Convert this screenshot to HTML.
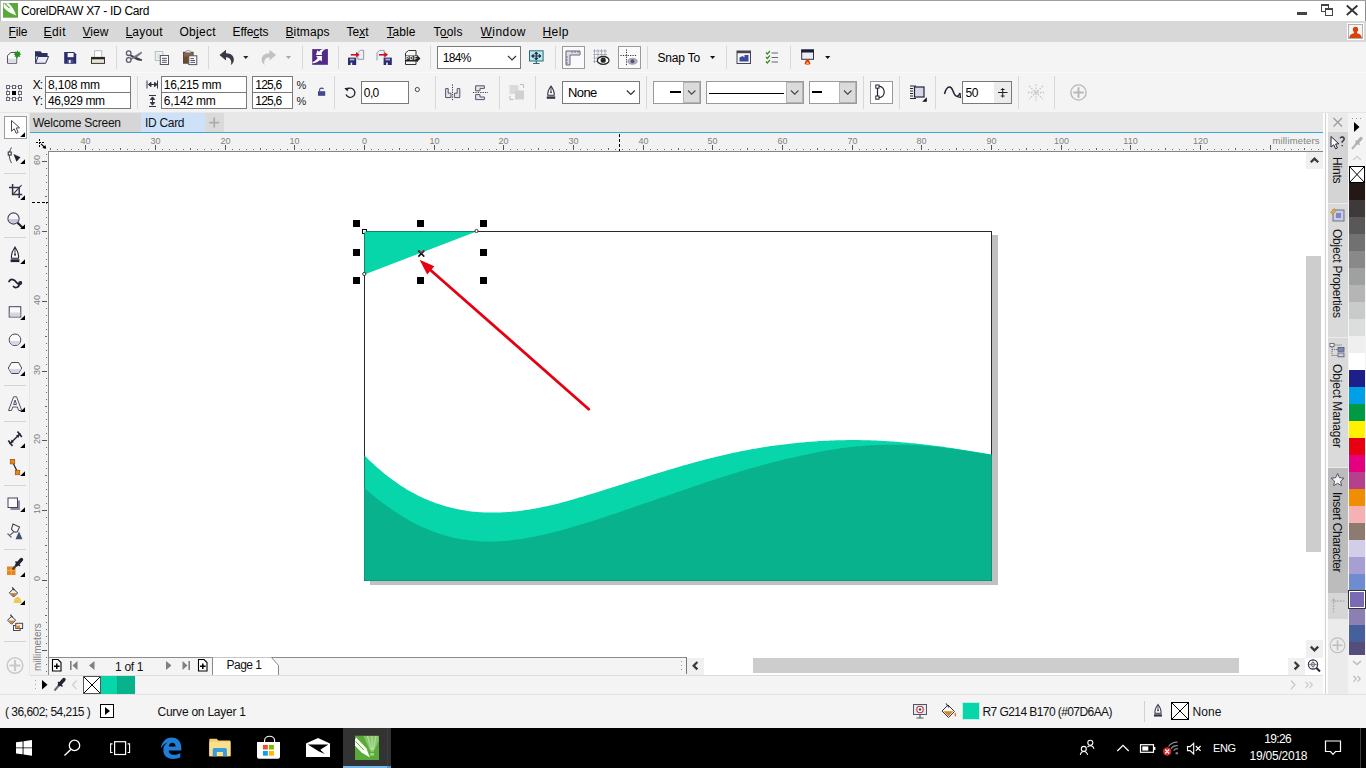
<!DOCTYPE html>
<html><head><meta charset="utf-8"><title>CorelDRAW X7 - ID Card</title>
<style>html,body{margin:0;padding:0;}
body{width:1366px;height:768px;overflow:hidden;position:relative;background:#f0f0f0;font-family:"Liberation Sans",sans-serif;}
#r{position:absolute;left:0;top:0;width:1366px;height:768px;overflow:hidden;}
#r>div{position:absolute;}
#r>span{position:absolute;white-space:pre;}
#r>svg{position:absolute;left:0;top:0;}
</style></head>
<body><div id="r">
<div style="left:0px;top:0px;width:1366px;height:21px;background:#ffffff;"></div>
<div style="left:0px;top:0px;width:1366px;height:1px;background:#a0a0a0;"></div>
<div style="left:1365px;top:1px;width:1px;height:20px;background:#8c8c8c;"></div>
<div style="left:0px;top:1px;width:1px;height:20px;background:#b9b9b9;"></div>
<div style="left:0px;top:21px;width:1366px;height:21px;background:#d8d8d8;"></div>
<div style="left:0px;top:42px;width:1366px;height:30px;background:#f4f4f4;"></div>
<div style="left:0px;top:72px;width:1366px;height:1px;background:#fafafa;"></div>
<div style="left:0px;top:73px;width:1366px;height:40px;background:#f4f4f4;"></div>
<div style="left:0px;top:112px;width:1366px;height:1px;background:#e6e6e6;"></div>
<div style="left:0px;top:113px;width:30px;height:582px;background:#f4f4f4;"></div>
<div style="left:29px;top:113px;width:1px;height:562px;background:#e6e6e6;"></div>
<div style="left:30px;top:113px;width:1293px;height:19px;background:#e8e8e8;"></div>
<div style="left:30px;top:113px;width:111px;height:19px;background:#d6d6d6;"></div>
<div style="left:141px;top:113px;width:64px;height:19px;background:#cde2f8;"></div>
<div style="left:205px;top:113px;width:19px;height:19px;background:#dadada;"></div>
<div style="left:30px;top:132px;width:1293px;height:1px;background:#39a6d6;"></div>
<div style="left:30px;top:133px;width:1293px;height:18px;background:#f2f2f2;"></div>
<div style="left:30px;top:151px;width:18px;height:524px;background:#f2f2f2;"></div>
<div style="left:48px;top:151px;width:1258px;height:507px;background:#ffffff;"></div>
<div style="left:48px;top:151px;width:1275px;height:1px;background:#858585;"></div>
<div style="left:48px;top:151px;width:1px;height:524px;background:#8c8c8c;"></div>
<div style="left:48px;top:657px;width:639px;height:1px;background:#8c8c8c;"></div>
<div style="left:1306px;top:152px;width:17px;height:505px;background:#ffffff;"></div>
<div style="left:1306px;top:152px;width:17px;height:17px;background:#f0f0f0;"></div>
<div style="left:1306px;top:151px;width:17px;height:1px;background:#858585;"></div>
<div style="left:1306px;top:640px;width:17px;height:17px;background:#f0f0f0;"></div>
<div style="left:1306px;top:256px;width:15px;height:296px;background:#cdcdcd;"></div>
<div style="left:48px;top:658px;width:1275px;height:17px;background:#f4f4f4;"></div>
<div style="left:686px;top:657px;width:1px;height:17px;background:#777777;"></div>
<div style="left:48px;top:658px;width:1px;height:17px;background:#8c8c8c;"></div>
<div style="left:687px;top:658px;width:636px;height:17px;background:#ffffff;"></div>
<div style="left:687px;top:658px;width:17px;height:17px;background:#f0f0f0;"></div>
<div style="left:1288px;top:658px;width:17px;height:17px;background:#f0f0f0;"></div>
<div style="left:753px;top:658px;width:486px;height:15px;background:#cdcdcd;"></div>
<div style="left:30px;top:675px;width:1293px;height:1px;background:#dcdcdc;"></div>
<div style="left:30px;top:676px;width:1293px;height:18px;background:#f4f4f4;"></div>
<div style="left:1323px;top:113px;width:5px;height:582px;background:#fdfdfd;"></div>
<div style="left:1325px;top:113px;width:1px;height:582px;background:#d2d2d2;"></div>
<div style="left:1328px;top:113px;width:20px;height:582px;background:#ebebeb;"></div>
<div style="left:1348px;top:113px;width:18px;height:582px;background:#f4f4f4;"></div>
<div style="left:0px;top:694px;width:1366px;height:1px;background:#e2e2e2;"></div>
<div style="left:0px;top:695px;width:1366px;height:33px;background:#f4f4f4;"></div>
<div style="left:0px;top:728px;width:1366px;height:40px;background:#000000;"></div>
<div style="left:343px;top:728px;width:48px;height:40px;background:#333333;"></div>
<div style="left:387px;top:728px;width:1px;height:40px;background:#3d3d3d;"></div>
<div style="left:343px;top:766px;width:44px;height:2px;background:#76b9ed;"></div>
<div style="left:387px;top:766px;width:4px;height:2px;background:#5a93c4;"></div>
<div style="left:1360px;top:728px;width:1px;height:40px;background:#3c3c3c;"></div>
<div style="left:992px;top:235px;width:6px;height:350px;background:#c0c0c0;"></div>
<div style="left:370px;top:581px;width:628px;height:4px;background:#c0c0c0;"></div>
<div style="left:1347px;top:23px;width:17px;height:17px;background:#fdfdfd;box-sizing:border-box;border:1px solid #fff;"></div>
<div style="left:1348px;top:24px;width:15px;height:15px;background:#f4f4f4;box-sizing:border-box;border:1px solid #b0b0b0;"></div>
<div style="left:437px;top:46px;width:84px;height:23px;background:#fff;box-sizing:border-box;border:1px solid #7a7a7a;"></div>
<div style="left:562px;top:46px;width:23px;height:23px;background:#fafafa;box-sizing:border-box;border:1px solid #9a9a9a;"></div>
<div style="left:618px;top:46px;width:23px;height:23px;background:#fafafa;box-sizing:border-box;border:1px solid #9a9a9a;"></div>
<div style="left:45px;top:76px;width:86px;height:17px;background:#fff;box-sizing:border-box;border:1px solid #7a7a7a;"></div>
<div style="left:45px;top:92px;width:86px;height:17px;background:#fff;box-sizing:border-box;border:1px solid #7a7a7a;"></div>
<div style="left:161px;top:76px;width:86px;height:17px;background:#fff;box-sizing:border-box;border:1px solid #7a7a7a;"></div>
<div style="left:161px;top:92px;width:86px;height:17px;background:#fff;box-sizing:border-box;border:1px solid #7a7a7a;"></div>
<div style="left:252px;top:76px;width:41px;height:17px;background:#fff;box-sizing:border-box;border:1px solid #7a7a7a;"></div>
<div style="left:252px;top:92px;width:41px;height:17px;background:#fff;box-sizing:border-box;border:1px solid #7a7a7a;"></div>
<div style="left:361px;top:81px;width:48px;height:23px;background:#fff;box-sizing:border-box;border:1px solid #7a7a7a;"></div>
<div style="left:562px;top:81px;width:78px;height:23px;background:#fff;box-sizing:border-box;border:1px solid #7a7a7a;"></div>
<div style="left:653px;top:81px;width:48px;height:23px;background:#fff;box-sizing:border-box;border:1px solid #9a9a9a;"></div>
<div style="left:683px;top:82px;width:17px;height:21px;background:#dbdbdb;box-sizing:border-box;border:1px solid #b4b4b4;"></div>
<div style="left:706px;top:81px;width:98px;height:23px;background:#fff;box-sizing:border-box;border:1px solid #9a9a9a;"></div>
<div style="left:786px;top:82px;width:17px;height:21px;background:#dbdbdb;box-sizing:border-box;border:1px solid #b4b4b4;"></div>
<div style="left:809px;top:81px;width:48px;height:23px;background:#fff;box-sizing:border-box;border:1px solid #9a9a9a;"></div>
<div style="left:839px;top:82px;width:17px;height:21px;background:#dbdbdb;box-sizing:border-box;border:1px solid #b4b4b4;"></div>
<div style="left:870px;top:81px;width:23px;height:23px;background:#fff;box-sizing:border-box;border:1px solid #9a9a9a;"></div>
<div style="left:962px;top:81px;width:50px;height:23px;background:#fff;box-sizing:border-box;border:1px solid #7a7a7a;"></div>
<div style="left:994px;top:82px;width:17px;height:21px;background:#ececec;"></div>
<div style="left:4px;top:116px;width:23px;height:23px;background:#fff;box-sizing:border-box;border:1px solid #9c9c9c;"></div>
<div style="left:1328px;top:113px;width:20px;height:19px;background:#eaeaea;"></div>
<div style="left:1328px;top:132px;width:20px;height:71px;background:#d4d4d4;"></div>
<div style="left:1328px;top:204px;width:20px;height:133px;background:#dadada;"></div>
<div style="left:1328px;top:338px;width:20px;height:129px;background:#dadada;"></div>
<div style="left:1328px;top:468px;width:20px;height:125px;background:#bcbcbc;"></div>
<div style="left:1328px;top:593px;width:20px;height:26px;background:#d6d6d6;"></div>
<svg width="1366" height="768" viewBox="0 0 1366 768" shape-rendering="crispEdges">
<rect x="364.5" y="231.5" width="627" height="349" fill="none" stroke="#2a2a2a" stroke-width="1"/>
<rect x="353" y="220" width="7" height="7" fill="#000"/>
<rect x="353" y="249" width="7" height="7" fill="#000"/>
<rect x="353" y="277" width="7" height="7" fill="#000"/>
<rect x="417" y="220" width="7" height="7" fill="#000"/>
<rect x="417" y="277" width="7" height="7" fill="#000"/>
<rect x="480" y="220" width="7" height="7" fill="#000"/>
<rect x="480" y="249" width="7" height="7" fill="#000"/>
<rect x="480" y="277" width="7" height="7" fill="#000"/>
<rect x="362.5" y="229.5" width="4" height="4" fill="#fff" stroke="#000" stroke-width="1"/>
<rect x="50" y="148" width="1" height="2" fill="#666"/>
<rect x="57" y="149" width="1" height="1" fill="#6a6a6a"/>
<rect x="64" y="149" width="1" height="1" fill="#6a6a6a"/>
<rect x="71" y="149" width="1" height="1" fill="#6a6a6a"/>
<rect x="78" y="149" width="1" height="1" fill="#6a6a6a"/>
<rect x="85" y="145" width="1" height="5" fill="#555"/>
<rect x="92" y="149" width="1" height="1" fill="#6a6a6a"/>
<rect x="99" y="149" width="1" height="1" fill="#6a6a6a"/>
<rect x="106" y="149" width="1" height="1" fill="#6a6a6a"/>
<rect x="113" y="149" width="1" height="1" fill="#6a6a6a"/>
<rect x="120" y="148" width="1" height="2" fill="#666"/>
<rect x="127" y="149" width="1" height="1" fill="#6a6a6a"/>
<rect x="134" y="149" width="1" height="1" fill="#6a6a6a"/>
<rect x="141" y="149" width="1" height="1" fill="#6a6a6a"/>
<rect x="148" y="149" width="1" height="1" fill="#6a6a6a"/>
<rect x="155" y="145" width="1" height="5" fill="#555"/>
<rect x="162" y="149" width="1" height="1" fill="#6a6a6a"/>
<rect x="169" y="149" width="1" height="1" fill="#6a6a6a"/>
<rect x="176" y="149" width="1" height="1" fill="#6a6a6a"/>
<rect x="183" y="149" width="1" height="1" fill="#6a6a6a"/>
<rect x="190" y="148" width="1" height="2" fill="#666"/>
<rect x="197" y="149" width="1" height="1" fill="#6a6a6a"/>
<rect x="204" y="149" width="1" height="1" fill="#6a6a6a"/>
<rect x="211" y="149" width="1" height="1" fill="#6a6a6a"/>
<rect x="218" y="149" width="1" height="1" fill="#6a6a6a"/>
<rect x="225" y="145" width="1" height="5" fill="#555"/>
<rect x="232" y="149" width="1" height="1" fill="#6a6a6a"/>
<rect x="239" y="149" width="1" height="1" fill="#6a6a6a"/>
<rect x="246" y="149" width="1" height="1" fill="#6a6a6a"/>
<rect x="253" y="149" width="1" height="1" fill="#6a6a6a"/>
<rect x="260" y="148" width="1" height="2" fill="#666"/>
<rect x="266" y="149" width="1" height="1" fill="#6a6a6a"/>
<rect x="273" y="149" width="1" height="1" fill="#6a6a6a"/>
<rect x="280" y="149" width="1" height="1" fill="#6a6a6a"/>
<rect x="287" y="149" width="1" height="1" fill="#6a6a6a"/>
<rect x="294" y="145" width="1" height="5" fill="#555"/>
<rect x="301" y="149" width="1" height="1" fill="#6a6a6a"/>
<rect x="308" y="149" width="1" height="1" fill="#6a6a6a"/>
<rect x="315" y="149" width="1" height="1" fill="#6a6a6a"/>
<rect x="322" y="149" width="1" height="1" fill="#6a6a6a"/>
<rect x="329" y="148" width="1" height="2" fill="#666"/>
<rect x="336" y="149" width="1" height="1" fill="#6a6a6a"/>
<rect x="343" y="149" width="1" height="1" fill="#6a6a6a"/>
<rect x="350" y="149" width="1" height="1" fill="#6a6a6a"/>
<rect x="357" y="149" width="1" height="1" fill="#6a6a6a"/>
<rect x="364" y="145" width="1" height="5" fill="#555"/>
<rect x="371" y="149" width="1" height="1" fill="#6a6a6a"/>
<rect x="378" y="149" width="1" height="1" fill="#6a6a6a"/>
<rect x="385" y="149" width="1" height="1" fill="#6a6a6a"/>
<rect x="392" y="149" width="1" height="1" fill="#6a6a6a"/>
<rect x="399" y="148" width="1" height="2" fill="#666"/>
<rect x="406" y="149" width="1" height="1" fill="#6a6a6a"/>
<rect x="413" y="149" width="1" height="1" fill="#6a6a6a"/>
<rect x="420" y="149" width="1" height="1" fill="#6a6a6a"/>
<rect x="427" y="149" width="1" height="1" fill="#6a6a6a"/>
<rect x="434" y="145" width="1" height="5" fill="#555"/>
<rect x="441" y="149" width="1" height="1" fill="#6a6a6a"/>
<rect x="448" y="149" width="1" height="1" fill="#6a6a6a"/>
<rect x="455" y="149" width="1" height="1" fill="#6a6a6a"/>
<rect x="462" y="149" width="1" height="1" fill="#6a6a6a"/>
<rect x="468" y="148" width="1" height="2" fill="#666"/>
<rect x="475" y="149" width="1" height="1" fill="#6a6a6a"/>
<rect x="482" y="149" width="1" height="1" fill="#6a6a6a"/>
<rect x="489" y="149" width="1" height="1" fill="#6a6a6a"/>
<rect x="496" y="149" width="1" height="1" fill="#6a6a6a"/>
<rect x="503" y="145" width="1" height="5" fill="#555"/>
<rect x="510" y="149" width="1" height="1" fill="#6a6a6a"/>
<rect x="517" y="149" width="1" height="1" fill="#6a6a6a"/>
<rect x="524" y="149" width="1" height="1" fill="#6a6a6a"/>
<rect x="531" y="149" width="1" height="1" fill="#6a6a6a"/>
<rect x="538" y="148" width="1" height="2" fill="#666"/>
<rect x="545" y="149" width="1" height="1" fill="#6a6a6a"/>
<rect x="552" y="149" width="1" height="1" fill="#6a6a6a"/>
<rect x="559" y="149" width="1" height="1" fill="#6a6a6a"/>
<rect x="566" y="149" width="1" height="1" fill="#6a6a6a"/>
<rect x="573" y="145" width="1" height="5" fill="#555"/>
<rect x="580" y="149" width="1" height="1" fill="#6a6a6a"/>
<rect x="587" y="149" width="1" height="1" fill="#6a6a6a"/>
<rect x="594" y="149" width="1" height="1" fill="#6a6a6a"/>
<rect x="601" y="149" width="1" height="1" fill="#6a6a6a"/>
<rect x="608" y="148" width="1" height="2" fill="#666"/>
<rect x="615" y="149" width="1" height="1" fill="#6a6a6a"/>
<rect x="622" y="149" width="1" height="1" fill="#6a6a6a"/>
<rect x="629" y="149" width="1" height="1" fill="#6a6a6a"/>
<rect x="636" y="149" width="1" height="1" fill="#6a6a6a"/>
<rect x="643" y="145" width="1" height="5" fill="#555"/>
<rect x="650" y="149" width="1" height="1" fill="#6a6a6a"/>
<rect x="657" y="149" width="1" height="1" fill="#6a6a6a"/>
<rect x="664" y="149" width="1" height="1" fill="#6a6a6a"/>
<rect x="671" y="149" width="1" height="1" fill="#6a6a6a"/>
<rect x="678" y="148" width="1" height="2" fill="#666"/>
<rect x="684" y="149" width="1" height="1" fill="#6a6a6a"/>
<rect x="691" y="149" width="1" height="1" fill="#6a6a6a"/>
<rect x="698" y="149" width="1" height="1" fill="#6a6a6a"/>
<rect x="705" y="149" width="1" height="1" fill="#6a6a6a"/>
<rect x="712" y="145" width="1" height="5" fill="#555"/>
<rect x="719" y="149" width="1" height="1" fill="#6a6a6a"/>
<rect x="726" y="149" width="1" height="1" fill="#6a6a6a"/>
<rect x="733" y="149" width="1" height="1" fill="#6a6a6a"/>
<rect x="740" y="149" width="1" height="1" fill="#6a6a6a"/>
<rect x="747" y="148" width="1" height="2" fill="#666"/>
<rect x="754" y="149" width="1" height="1" fill="#6a6a6a"/>
<rect x="761" y="149" width="1" height="1" fill="#6a6a6a"/>
<rect x="768" y="149" width="1" height="1" fill="#6a6a6a"/>
<rect x="775" y="149" width="1" height="1" fill="#6a6a6a"/>
<rect x="782" y="145" width="1" height="5" fill="#555"/>
<rect x="789" y="149" width="1" height="1" fill="#6a6a6a"/>
<rect x="796" y="149" width="1" height="1" fill="#6a6a6a"/>
<rect x="803" y="149" width="1" height="1" fill="#6a6a6a"/>
<rect x="810" y="149" width="1" height="1" fill="#6a6a6a"/>
<rect x="817" y="148" width="1" height="2" fill="#666"/>
<rect x="824" y="149" width="1" height="1" fill="#6a6a6a"/>
<rect x="831" y="149" width="1" height="1" fill="#6a6a6a"/>
<rect x="838" y="149" width="1" height="1" fill="#6a6a6a"/>
<rect x="845" y="149" width="1" height="1" fill="#6a6a6a"/>
<rect x="852" y="145" width="1" height="5" fill="#555"/>
<rect x="859" y="149" width="1" height="1" fill="#6a6a6a"/>
<rect x="866" y="149" width="1" height="1" fill="#6a6a6a"/>
<rect x="873" y="149" width="1" height="1" fill="#6a6a6a"/>
<rect x="880" y="149" width="1" height="1" fill="#6a6a6a"/>
<rect x="886" y="148" width="1" height="2" fill="#666"/>
<rect x="893" y="149" width="1" height="1" fill="#6a6a6a"/>
<rect x="900" y="149" width="1" height="1" fill="#6a6a6a"/>
<rect x="907" y="149" width="1" height="1" fill="#6a6a6a"/>
<rect x="914" y="149" width="1" height="1" fill="#6a6a6a"/>
<rect x="921" y="145" width="1" height="5" fill="#555"/>
<rect x="928" y="149" width="1" height="1" fill="#6a6a6a"/>
<rect x="935" y="149" width="1" height="1" fill="#6a6a6a"/>
<rect x="942" y="149" width="1" height="1" fill="#6a6a6a"/>
<rect x="949" y="149" width="1" height="1" fill="#6a6a6a"/>
<rect x="956" y="148" width="1" height="2" fill="#666"/>
<rect x="963" y="149" width="1" height="1" fill="#6a6a6a"/>
<rect x="970" y="149" width="1" height="1" fill="#6a6a6a"/>
<rect x="977" y="149" width="1" height="1" fill="#6a6a6a"/>
<rect x="984" y="149" width="1" height="1" fill="#6a6a6a"/>
<rect x="991" y="145" width="1" height="5" fill="#555"/>
<rect x="998" y="149" width="1" height="1" fill="#6a6a6a"/>
<rect x="1005" y="149" width="1" height="1" fill="#6a6a6a"/>
<rect x="1012" y="149" width="1" height="1" fill="#6a6a6a"/>
<rect x="1019" y="149" width="1" height="1" fill="#6a6a6a"/>
<rect x="1026" y="148" width="1" height="2" fill="#666"/>
<rect x="1033" y="149" width="1" height="1" fill="#6a6a6a"/>
<rect x="1040" y="149" width="1" height="1" fill="#6a6a6a"/>
<rect x="1047" y="149" width="1" height="1" fill="#6a6a6a"/>
<rect x="1054" y="149" width="1" height="1" fill="#6a6a6a"/>
<rect x="1061" y="145" width="1" height="5" fill="#555"/>
<rect x="1068" y="149" width="1" height="1" fill="#6a6a6a"/>
<rect x="1075" y="149" width="1" height="1" fill="#6a6a6a"/>
<rect x="1082" y="149" width="1" height="1" fill="#6a6a6a"/>
<rect x="1089" y="149" width="1" height="1" fill="#6a6a6a"/>
<rect x="1096" y="148" width="1" height="2" fill="#666"/>
<rect x="1102" y="149" width="1" height="1" fill="#6a6a6a"/>
<rect x="1109" y="149" width="1" height="1" fill="#6a6a6a"/>
<rect x="1116" y="149" width="1" height="1" fill="#6a6a6a"/>
<rect x="1123" y="149" width="1" height="1" fill="#6a6a6a"/>
<rect x="1130" y="145" width="1" height="5" fill="#555"/>
<rect x="1137" y="149" width="1" height="1" fill="#6a6a6a"/>
<rect x="1144" y="149" width="1" height="1" fill="#6a6a6a"/>
<rect x="1151" y="149" width="1" height="1" fill="#6a6a6a"/>
<rect x="1158" y="149" width="1" height="1" fill="#6a6a6a"/>
<rect x="1165" y="148" width="1" height="2" fill="#666"/>
<rect x="1172" y="149" width="1" height="1" fill="#6a6a6a"/>
<rect x="1179" y="149" width="1" height="1" fill="#6a6a6a"/>
<rect x="1186" y="149" width="1" height="1" fill="#6a6a6a"/>
<rect x="1193" y="149" width="1" height="1" fill="#6a6a6a"/>
<rect x="1200" y="145" width="1" height="5" fill="#555"/>
<rect x="1207" y="149" width="1" height="1" fill="#6a6a6a"/>
<rect x="1214" y="149" width="1" height="1" fill="#6a6a6a"/>
<rect x="1221" y="149" width="1" height="1" fill="#6a6a6a"/>
<rect x="1228" y="149" width="1" height="1" fill="#6a6a6a"/>
<rect x="1235" y="148" width="1" height="2" fill="#666"/>
<rect x="1242" y="149" width="1" height="1" fill="#6a6a6a"/>
<rect x="1249" y="149" width="1" height="1" fill="#6a6a6a"/>
<rect x="1256" y="149" width="1" height="1" fill="#6a6a6a"/>
<rect x="1263" y="149" width="1" height="1" fill="#6a6a6a"/>
<rect x="1270" y="145" width="1" height="5" fill="#555"/>
<rect x="1277" y="149" width="1" height="1" fill="#6a6a6a"/>
<rect x="1284" y="149" width="1" height="1" fill="#6a6a6a"/>
<rect x="1291" y="149" width="1" height="1" fill="#6a6a6a"/>
<rect x="1298" y="149" width="1" height="1" fill="#6a6a6a"/>
<rect x="1304" y="148" width="1" height="2" fill="#666"/>
<rect x="1311" y="149" width="1" height="1" fill="#6a6a6a"/>
<rect x="1318" y="149" width="1" height="1" fill="#6a6a6a"/>
<rect x="619" y="134" width="1" height="3" fill="#000"/><rect x="619" y="139" width="1" height="3" fill="#000"/><rect x="619" y="144" width="1" height="3" fill="#000"/><rect x="619" y="149" width="1" height="2" fill="#000"/>
<rect x="32" y="202" width="3" height="1" fill="#000"/><rect x="37" y="202" width="3" height="1" fill="#000"/><rect x="42" y="202" width="3" height="1" fill="#000"/><rect x="46" y="202" width="2" height="1" fill="#000"/>
<rect x="46" y="671" width="1" height="1" fill="#6a6a6a"/>
<rect x="46" y="664" width="1" height="1" fill="#6a6a6a"/>
<rect x="46" y="657" width="1" height="1" fill="#6a6a6a"/>
<rect x="42" y="650" width="5" height="1" fill="#555"/>
<rect x="46" y="643" width="1" height="1" fill="#6a6a6a"/>
<rect x="46" y="636" width="1" height="1" fill="#6a6a6a"/>
<rect x="46" y="629" width="1" height="1" fill="#6a6a6a"/>
<rect x="46" y="622" width="1" height="1" fill="#6a6a6a"/>
<rect x="45" y="615" width="2" height="1" fill="#666"/>
<rect x="46" y="608" width="1" height="1" fill="#6a6a6a"/>
<rect x="46" y="601" width="1" height="1" fill="#6a6a6a"/>
<rect x="46" y="594" width="1" height="1" fill="#6a6a6a"/>
<rect x="46" y="587" width="1" height="1" fill="#6a6a6a"/>
<rect x="42" y="580" width="5" height="1" fill="#555"/>
<rect x="46" y="573" width="1" height="1" fill="#6a6a6a"/>
<rect x="46" y="566" width="1" height="1" fill="#6a6a6a"/>
<rect x="46" y="559" width="1" height="1" fill="#6a6a6a"/>
<rect x="46" y="552" width="1" height="1" fill="#6a6a6a"/>
<rect x="45" y="545" width="2" height="1" fill="#666"/>
<rect x="46" y="538" width="1" height="1" fill="#6a6a6a"/>
<rect x="46" y="531" width="1" height="1" fill="#6a6a6a"/>
<rect x="46" y="524" width="1" height="1" fill="#6a6a6a"/>
<rect x="46" y="517" width="1" height="1" fill="#6a6a6a"/>
<rect x="42" y="510" width="5" height="1" fill="#555"/>
<rect x="46" y="503" width="1" height="1" fill="#6a6a6a"/>
<rect x="46" y="496" width="1" height="1" fill="#6a6a6a"/>
<rect x="46" y="489" width="1" height="1" fill="#6a6a6a"/>
<rect x="46" y="482" width="1" height="1" fill="#6a6a6a"/>
<rect x="45" y="475" width="2" height="1" fill="#666"/>
<rect x="46" y="468" width="1" height="1" fill="#6a6a6a"/>
<rect x="46" y="461" width="1" height="1" fill="#6a6a6a"/>
<rect x="46" y="454" width="1" height="1" fill="#6a6a6a"/>
<rect x="46" y="447" width="1" height="1" fill="#6a6a6a"/>
<rect x="42" y="440" width="5" height="1" fill="#555"/>
<rect x="46" y="433" width="1" height="1" fill="#6a6a6a"/>
<rect x="46" y="426" width="1" height="1" fill="#6a6a6a"/>
<rect x="46" y="419" width="1" height="1" fill="#6a6a6a"/>
<rect x="46" y="412" width="1" height="1" fill="#6a6a6a"/>
<rect x="45" y="406" width="2" height="1" fill="#666"/>
<rect x="46" y="399" width="1" height="1" fill="#6a6a6a"/>
<rect x="46" y="392" width="1" height="1" fill="#6a6a6a"/>
<rect x="46" y="385" width="1" height="1" fill="#6a6a6a"/>
<rect x="46" y="378" width="1" height="1" fill="#6a6a6a"/>
<rect x="42" y="371" width="5" height="1" fill="#555"/>
<rect x="46" y="364" width="1" height="1" fill="#6a6a6a"/>
<rect x="46" y="357" width="1" height="1" fill="#6a6a6a"/>
<rect x="46" y="350" width="1" height="1" fill="#6a6a6a"/>
<rect x="46" y="343" width="1" height="1" fill="#6a6a6a"/>
<rect x="45" y="336" width="2" height="1" fill="#666"/>
<rect x="46" y="329" width="1" height="1" fill="#6a6a6a"/>
<rect x="46" y="322" width="1" height="1" fill="#6a6a6a"/>
<rect x="46" y="315" width="1" height="1" fill="#6a6a6a"/>
<rect x="46" y="308" width="1" height="1" fill="#6a6a6a"/>
<rect x="42" y="301" width="5" height="1" fill="#555"/>
<rect x="46" y="294" width="1" height="1" fill="#6a6a6a"/>
<rect x="46" y="287" width="1" height="1" fill="#6a6a6a"/>
<rect x="46" y="280" width="1" height="1" fill="#6a6a6a"/>
<rect x="46" y="273" width="1" height="1" fill="#6a6a6a"/>
<rect x="45" y="266" width="2" height="1" fill="#666"/>
<rect x="46" y="259" width="1" height="1" fill="#6a6a6a"/>
<rect x="46" y="252" width="1" height="1" fill="#6a6a6a"/>
<rect x="46" y="245" width="1" height="1" fill="#6a6a6a"/>
<rect x="46" y="238" width="1" height="1" fill="#6a6a6a"/>
<rect x="42" y="231" width="5" height="1" fill="#555"/>
<rect x="46" y="224" width="1" height="1" fill="#6a6a6a"/>
<rect x="46" y="217" width="1" height="1" fill="#6a6a6a"/>
<rect x="46" y="210" width="1" height="1" fill="#6a6a6a"/>
<rect x="46" y="203" width="1" height="1" fill="#6a6a6a"/>
<rect x="45" y="196" width="2" height="1" fill="#666"/>
<rect x="46" y="189" width="1" height="1" fill="#6a6a6a"/>
<rect x="46" y="182" width="1" height="1" fill="#6a6a6a"/>
<rect x="46" y="175" width="1" height="1" fill="#6a6a6a"/>
<rect x="46" y="168" width="1" height="1" fill="#6a6a6a"/>
<rect x="42" y="161" width="5" height="1" fill="#555"/>
<rect x="46" y="154" width="1" height="1" fill="#6a6a6a"/>
<rect x="36" y="142" width="2" height="1" fill="#000"/><rect x="39" y="142" width="2" height="1" fill="#000"/><rect x="42" y="142" width="2" height="1" fill="#000"/><rect x="39" y="139" width="1" height="2" fill="#000"/><rect x="39" y="142" width="1" height="2" fill="#000"/><rect x="39" y="145" width="1" height="2" fill="#000"/>
<rect x="1297" y="12" width="10" height="3" fill="#444"/>
<rect x="1321.5" y="4.5" width="7" height="7" fill="#fff" stroke="#444" stroke-width="1"/><rect x="1321" y="4" width="8" height="2" fill="#444"/><rect x="1325.5" y="8.5" width="7" height="7" fill="#fff" stroke="#444" stroke-width="1"/><rect x="1325" y="8" width="8" height="2" fill="#444"/>
<rect x="9" y="37" width="7" height="1" fill="#000"/>
<rect x="44" y="37" width="8" height="1" fill="#000"/>
<rect x="83" y="37" width="8" height="1" fill="#000"/>
<rect x="126" y="37" width="7" height="1" fill="#000"/>
<rect x="196" y="37" width="3" height="1" fill="#000"/>
<rect x="253" y="37" width="6" height="1" fill="#000"/>
<rect x="286" y="37" width="8" height="1" fill="#000"/>
<rect x="359" y="37" width="6" height="1" fill="#000"/>
<rect x="387" y="37" width="7" height="1" fill="#000"/>
<rect x="441" y="37" width="7" height="1" fill="#000"/>
<rect x="481" y="37" width="12" height="1" fill="#000"/>
<rect x="543" y="37" width="9" height="1" fill="#000"/>
<rect x="116" y="46" width="1" height="23" fill="#d8d8d8"/>
<rect x="208" y="46" width="1" height="23" fill="#d8d8d8"/>
<rect x="302" y="46" width="1" height="23" fill="#d8d8d8"/>
<rect x="338" y="46" width="1" height="23" fill="#d8d8d8"/>
<rect x="430" y="46" width="1" height="23" fill="#d8d8d8"/>
<rect x="555" y="46" width="1" height="23" fill="#d8d8d8"/>
<rect x="647" y="46" width="1" height="23" fill="#d8d8d8"/>
<rect x="726" y="46" width="1" height="23" fill="#d8d8d8"/>
<rect x="790" y="46" width="1" height="23" fill="#d8d8d8"/>
<rect x="137" y="76" width="1" height="33" fill="#d8d8d8"/>
<rect x="334" y="76" width="1" height="33" fill="#d8d8d8"/>
<rect x="435" y="76" width="1" height="33" fill="#d8d8d8"/>
<rect x="499" y="76" width="1" height="33" fill="#d8d8d8"/>
<rect x="535" y="76" width="1" height="33" fill="#d8d8d8"/>
<rect x="646" y="76" width="1" height="33" fill="#d8d8d8"/>
<rect x="863" y="76" width="1" height="33" fill="#d8d8d8"/>
<rect x="899" y="76" width="1" height="33" fill="#d8d8d8"/>
<rect x="935" y="76" width="1" height="33" fill="#d8d8d8"/>
<rect x="1018" y="76" width="1" height="33" fill="#d8d8d8"/>
<rect x="1054" y="76" width="1" height="33" fill="#d8d8d8"/>
<rect x="7.5" y="86.5" width="12" height="12" fill="none" stroke="#a4a4b8" stroke-width="1"/>
<rect x="6.5" y="85.5" width="3" height="3" fill="#f8f8f8" stroke="#667" stroke-width="1"/>
<rect x="6.5" y="91.5" width="3" height="3" fill="#f8f8f8" stroke="#667" stroke-width="1"/>
<rect x="6.5" y="97.5" width="3" height="3" fill="#f8f8f8" stroke="#667" stroke-width="1"/>
<rect x="12.5" y="85.5" width="3" height="3" fill="#f8f8f8" stroke="#667" stroke-width="1"/>
<rect x="12" y="91" width="4" height="4" fill="#000"/>
<rect x="12.5" y="97.5" width="3" height="3" fill="#f8f8f8" stroke="#667" stroke-width="1"/>
<rect x="18.5" y="85.5" width="3" height="3" fill="#f8f8f8" stroke="#667" stroke-width="1"/>
<rect x="18.5" y="91.5" width="3" height="3" fill="#f8f8f8" stroke="#667" stroke-width="1"/>
<rect x="18.5" y="97.5" width="3" height="3" fill="#f8f8f8" stroke="#667" stroke-width="1"/>
<rect x="670" y="91" width="11" height="2" fill="#000"/>
<rect x="709" y="93" width="75" height="1" fill="#000"/>
<rect x="812" y="91" width="10" height="2" fill="#000"/>
<rect x="4" y="173" width="22" height="1" fill="#d4d4d4"/>
<rect x="4" y="237" width="22" height="1" fill="#d4d4d4"/>
<rect x="4" y="385" width="22" height="1" fill="#d4d4d4"/>
<rect x="4" y="421" width="22" height="1" fill="#d4d4d4"/>
<rect x="4" y="485" width="22" height="1" fill="#d4d4d4"/>
<rect x="4" y="549" width="22" height="1" fill="#d4d4d4"/>
<rect x="4" y="641" width="22" height="1" fill="#d4d4d4"/>
<rect x="1352" y="118" width="1" height="1" fill="#999"/><rect x="1356" y="118" width="1" height="1" fill="#999"/><rect x="1360" y="118" width="1" height="1" fill="#999"/>
<rect x="1349.5" y="166.5" width="15" height="16" fill="#fff" stroke="#000" stroke-width="1"/>
<rect x="1349" y="183" width="16" height="17" fill="#231815"/>
<rect x="1349" y="200" width="16" height="17" fill="#3e3a39"/>
<rect x="1349" y="217" width="16" height="17" fill="#595757"/>
<rect x="1349" y="234" width="16" height="17" fill="#727171"/>
<rect x="1349" y="251" width="16" height="17" fill="#898989"/>
<rect x="1349" y="268" width="16" height="17" fill="#9fa0a0"/>
<rect x="1349" y="285" width="16" height="17" fill="#b5b5b6"/>
<rect x="1349" y="302" width="16" height="17" fill="#c9caca"/>
<rect x="1349" y="319" width="16" height="17" fill="#dcdddd"/>
<rect x="1349" y="336" width="16" height="17" fill="#efefef"/>
<rect x="1349" y="353" width="16" height="17" fill="#ffffff"/>
<rect x="1349" y="370" width="16" height="17" fill="#1d2088"/>
<rect x="1349" y="387" width="16" height="17" fill="#00a0e9"/>
<rect x="1349" y="404" width="16" height="17" fill="#009944"/>
<rect x="1349" y="421" width="16" height="17" fill="#fff100"/>
<rect x="1349" y="438" width="16" height="17" fill="#e60012"/>
<rect x="1349" y="455" width="16" height="17" fill="#e4007f"/>
<rect x="1349" y="472" width="16" height="17" fill="#b5408c"/>
<rect x="1349" y="489" width="16" height="17" fill="#f18d00"/>
<rect x="1349" y="506" width="16" height="17" fill="#f5b2b2"/>
<rect x="1349" y="523" width="16" height="17" fill="#8c7b6e"/>
<rect x="1349" y="540" width="16" height="17" fill="#d2cde8"/>
<rect x="1349" y="557" width="16" height="17" fill="#a79fd2"/>
<rect x="1349" y="574" width="16" height="17" fill="#6f8cd0"/>
<rect x="1349" y="591" width="16" height="17" fill="#7a6ab4"/>
<rect x="1349" y="608" width="16" height="17" fill="#8c80b2"/>
<rect x="1349" y="625" width="16" height="17" fill="#45609a"/>
<rect x="1349" y="642" width="16" height="13" fill="#564e7a"/>
<rect x="1349.5" y="591.5" width="15" height="16" fill="none" stroke="#fff" stroke-width="1"/><rect x="1348.5" y="590.5" width="17" height="18" fill="none" stroke="#333" stroke-width="1"/>
<rect x="681" y="661" width="1" height="1" fill="#999"/><rect x="681" y="665" width="1" height="1" fill="#999"/><rect x="681" y="669" width="1" height="1" fill="#999"/>
<rect x="35" y="680" width="1" height="1" fill="#aaa"/><rect x="35" y="684" width="1" height="1" fill="#aaa"/><rect x="35" y="688" width="1" height="1" fill="#aaa"/>
<rect x="83.5" y="676.5" width="17" height="17" fill="#fff" stroke="#555" stroke-width="1"/>
<rect x="101" y="676" width="17" height="18" fill="#07d6aa"/><rect x="117" y="676" width="1" height="18" fill="#05a583"/><rect x="118" y="676" width="17" height="18" fill="#07b28d"/>
<rect x="100.5" y="704.5" width="13" height="13" fill="#fff" stroke="#000" stroke-width="1"/>
<rect x="962" y="702" width="18" height="18" fill="#07d6aa"/><rect x="962.5" y="702.5" width="17" height="17" fill="none" stroke="#bfeee2" stroke-width="1"/>
<rect x="1144" y="701" width="1" height="21" fill="#d0d0d0"/>
<rect x="1171.5" y="702.5" width="17" height="17" fill="#fff" stroke="#000" stroke-width="1"/>
</svg>
<svg width="1366" height="768" viewBox="0 0 1366 768">
<path d="M364.5,455.46 L366.6,457.57 L368.7,459.63 L370.8,461.65 L372.9,463.61 L375.0,465.54 L377.1,467.42 L379.2,469.25 L381.3,471.04 L383.4,472.78 L385.5,474.48 L387.6,476.13 L389.7,477.75 L391.8,479.31 L393.9,480.84 L396.0,482.33 L398.1,483.77 L400.1,485.17 L402.2,486.53 L404.3,487.86 L406.4,489.14 L408.5,490.38 L410.6,491.58 L412.7,492.75 L414.8,493.87 L416.9,494.96 L419.0,496.01 L421.1,497.03 L423.2,498.01 L425.3,498.95 L427.4,499.85 L429.5,500.73 L431.6,501.56 L433.7,502.36 L435.8,503.13 L437.9,503.87 L440.0,504.57 L442.1,505.24 L444.2,505.87 L446.3,506.48 L448.4,507.05 L450.5,507.60 L452.6,508.11 L454.7,508.59 L456.8,509.04 L458.9,509.47 L461.0,509.86 L463.1,510.23 L465.2,510.57 L467.3,510.88 L469.3,511.16 L471.4,511.42 L473.5,511.65 L475.6,511.86 L477.7,512.04 L479.8,512.19 L481.9,512.32 L484.0,512.43 L486.1,512.51 L488.2,512.57 L490.3,512.60 L492.4,512.61 L494.5,512.61 L496.6,512.57 L498.7,512.52 L500.8,512.45 L502.9,512.36 L505.0,512.24 L507.1,512.11 L509.2,511.96 L511.3,511.78 L513.4,511.59 L515.5,511.38 L517.6,511.16 L519.7,510.91 L521.8,510.64 L523.9,510.36 L526.0,510.06 L528.1,509.74 L530.2,509.40 L532.3,509.05 L534.4,508.68 L536.5,508.30 L538.6,507.90 L540.6,507.48 L542.7,507.06 L544.8,506.61 L546.9,506.15 L549.0,505.68 L551.1,505.20 L553.2,504.70 L555.3,504.19 L557.4,503.67 L559.5,503.13 L561.6,502.59 L563.7,502.03 L565.8,501.46 L567.9,500.88 L570.0,500.30 L572.1,499.70 L574.2,499.10 L576.3,498.49 L578.4,497.87 L580.5,497.25 L582.6,496.63 L584.7,496.00 L586.8,495.36 L588.9,494.72 L591.0,494.08 L593.1,493.44 L595.2,492.79 L597.3,492.14 L599.4,491.49 L601.5,490.83 L603.6,490.18 L605.7,489.52 L607.8,488.86 L609.8,488.20 L611.9,487.54 L614.0,486.88 L616.1,486.21 L618.2,485.55 L620.3,484.89 L622.4,484.23 L624.5,483.57 L626.6,482.91 L628.7,482.25 L630.8,481.59 L632.9,480.93 L635.0,480.27 L637.1,479.61 L639.2,478.96 L641.3,478.30 L643.4,477.64 L645.5,476.98 L647.6,476.33 L649.7,475.68 L651.8,475.02 L653.9,474.37 L656.0,473.73 L658.1,473.08 L660.2,472.44 L662.3,471.80 L664.4,471.16 L666.5,470.53 L668.6,469.90 L670.7,469.27 L672.8,468.65 L674.9,468.03 L677.0,467.41 L679.0,466.80 L681.1,466.19 L683.2,465.59 L685.3,464.99 L687.4,464.40 L689.5,463.81 L691.6,463.23 L693.7,462.65 L695.8,462.08 L697.9,461.51 L700.0,460.95 L702.1,460.39 L704.2,459.85 L706.3,459.30 L708.4,458.77 L710.5,458.24 L712.6,457.71 L714.7,457.19 L716.8,456.68 L718.9,456.18 L721.0,455.68 L723.1,455.19 L725.2,454.71 L727.3,454.23 L729.4,453.77 L731.5,453.31 L733.6,452.85 L735.7,452.41 L737.8,451.97 L739.9,451.54 L742.0,451.12 L744.1,450.70 L746.2,450.30 L748.2,449.90 L750.3,449.51 L752.4,449.12 L754.5,448.75 L756.6,448.38 L758.7,448.03 L760.8,447.68 L762.9,447.34 L765.0,447.01 L767.1,446.68 L769.2,446.37 L771.3,446.06 L773.4,445.76 L775.5,445.47 L777.6,445.19 L779.7,444.91 L781.8,444.65 L783.9,444.39 L786.0,444.13 L788.1,443.89 L790.2,443.65 L792.3,443.42 L794.4,443.20 L796.5,442.98 L798.6,442.78 L800.7,442.57 L802.8,442.38 L804.9,442.20 L807.0,442.02 L809.1,441.85 L811.2,441.69 L813.3,441.53 L815.4,441.38 L817.4,441.24 L819.5,441.11 L821.6,440.98 L823.7,440.86 L825.8,440.75 L827.9,440.65 L830.0,440.55 L832.1,440.47 L834.2,440.39 L836.3,440.32 L838.4,440.26 L840.5,440.21 L842.6,440.16 L844.7,440.13 L846.8,440.10 L848.9,440.08 L851.0,440.07 L853.1,440.07 L855.2,440.08 L857.3,440.09 L859.4,440.12 L861.5,440.15 L863.6,440.19 L865.7,440.24 L867.8,440.29 L869.9,440.35 L872.0,440.43 L874.1,440.50 L876.2,440.59 L878.3,440.69 L880.4,440.79 L882.5,440.90 L884.6,441.01 L886.7,441.14 L888.7,441.27 L890.8,441.41 L892.9,441.55 L895.0,441.70 L897.1,441.86 L899.2,442.03 L901.3,442.20 L903.4,442.38 L905.5,442.56 L907.6,442.75 L909.7,442.95 L911.8,443.15 L913.9,443.36 L916.0,443.57 L918.1,443.79 L920.2,444.02 L922.3,444.25 L924.4,444.49 L926.5,444.73 L928.6,444.98 L930.7,445.23 L932.8,445.49 L934.9,445.75 L937.0,446.02 L939.1,446.30 L941.2,446.58 L943.3,446.86 L945.4,447.15 L947.5,447.44 L949.6,447.74 L951.7,448.05 L953.8,448.35 L955.9,448.67 L957.9,448.98 L960.0,449.30 L962.1,449.63 L964.2,449.96 L966.3,450.29 L968.4,450.63 L970.5,450.97 L972.6,451.32 L974.7,451.67 L976.8,452.03 L978.9,452.39 L981.0,452.75 L983.1,453.12 L985.2,453.49 L987.3,453.86 L989.4,454.24 L991.5,454.62 L991.5,580.5 L364.5,580.5 Z" fill="#07d6aa"/>
<path d="M364.5,488.26 L366.6,490.05 L368.7,491.83 L370.8,493.58 L372.9,495.30 L375.0,496.99 L377.1,498.66 L379.2,500.30 L381.3,501.91 L383.4,503.49 L385.5,505.04 L387.6,506.56 L389.7,508.04 L391.8,509.50 L393.9,510.93 L396.0,512.32 L398.1,513.68 L400.1,515.01 L402.2,516.30 L404.3,517.56 L406.4,518.79 L408.5,519.99 L410.6,521.15 L412.7,522.28 L414.8,523.38 L416.9,524.44 L419.0,525.47 L421.1,526.46 L423.2,527.42 L425.3,528.35 L427.4,529.24 L429.5,530.10 L431.6,530.93 L433.7,531.72 L435.8,532.49 L437.9,533.21 L440.0,533.91 L442.1,534.57 L444.2,535.21 L446.3,535.81 L448.4,536.37 L450.5,536.91 L452.6,537.42 L454.7,537.89 L456.8,538.33 L458.9,538.75 L461.0,539.13 L463.1,539.49 L465.2,539.81 L467.3,540.11 L469.3,540.38 L471.4,540.61 L473.5,540.83 L475.6,541.01 L477.7,541.17 L479.8,541.30 L481.9,541.40 L484.0,541.48 L486.1,541.53 L488.2,541.56 L490.3,541.57 L492.4,541.54 L494.5,541.50 L496.6,541.43 L498.7,541.34 L500.8,541.23 L502.9,541.09 L505.0,540.93 L507.1,540.75 L509.2,540.55 L511.3,540.33 L513.4,540.09 L515.5,539.83 L517.6,539.55 L519.7,539.26 L521.8,538.94 L523.9,538.61 L526.0,538.26 L528.1,537.89 L530.2,537.50 L532.3,537.10 L534.4,536.69 L536.5,536.25 L538.6,535.81 L540.6,535.35 L542.7,534.88 L544.8,534.40 L546.9,533.91 L549.0,533.41 L551.1,532.89 L553.2,532.36 L555.3,531.83 L557.4,531.28 L559.5,530.73 L561.6,530.16 L563.7,529.59 L565.8,529.01 L567.9,528.42 L570.0,527.82 L572.1,527.22 L574.2,526.61 L576.3,525.99 L578.4,525.37 L580.5,524.74 L582.6,524.10 L584.7,523.46 L586.8,522.81 L588.9,522.15 L591.0,521.49 L593.1,520.83 L595.2,520.15 L597.3,519.48 L599.4,518.79 L601.5,518.11 L603.6,517.41 L605.7,516.72 L607.8,516.02 L609.8,515.31 L611.9,514.61 L614.0,513.90 L616.1,513.19 L618.2,512.48 L620.3,511.76 L622.4,511.04 L624.5,510.32 L626.6,509.60 L628.7,508.88 L630.8,508.16 L632.9,507.44 L635.0,506.72 L637.1,505.99 L639.2,505.27 L641.3,504.55 L643.4,503.83 L645.5,503.11 L647.6,502.39 L649.7,501.67 L651.8,500.95 L653.9,500.23 L656.0,499.52 L658.1,498.80 L660.2,498.08 L662.3,497.36 L664.4,496.64 L666.5,495.92 L668.6,495.20 L670.7,494.48 L672.8,493.76 L674.9,493.04 L677.0,492.32 L679.0,491.60 L681.1,490.88 L683.2,490.16 L685.3,489.44 L687.4,488.73 L689.5,488.01 L691.6,487.29 L693.7,486.58 L695.8,485.87 L697.9,485.16 L700.0,484.45 L702.1,483.74 L704.2,483.03 L706.3,482.33 L708.4,481.62 L710.5,480.93 L712.6,480.23 L714.7,479.54 L716.8,478.86 L718.9,478.17 L721.0,477.50 L723.1,476.82 L725.2,476.15 L727.3,475.49 L729.4,474.83 L731.5,474.18 L733.6,473.53 L735.7,472.88 L737.8,472.24 L739.9,471.61 L742.0,470.98 L744.1,470.35 L746.2,469.74 L748.2,469.12 L750.3,468.51 L752.4,467.91 L754.5,467.32 L756.6,466.73 L758.7,466.14 L760.8,465.56 L762.9,464.99 L765.0,464.43 L767.1,463.87 L769.2,463.31 L771.3,462.77 L773.4,462.23 L775.5,461.70 L777.6,461.17 L779.7,460.64 L781.8,460.13 L783.9,459.62 L786.0,459.11 L788.1,458.61 L790.2,458.11 L792.3,457.63 L794.4,457.14 L796.5,456.67 L798.6,456.20 L800.7,455.73 L802.8,455.27 L804.9,454.82 L807.0,454.38 L809.1,453.94 L811.2,453.51 L813.3,453.09 L815.4,452.67 L817.4,452.27 L819.5,451.87 L821.6,451.47 L823.7,451.09 L825.8,450.71 L827.9,450.34 L830.0,449.98 L832.1,449.63 L834.2,449.29 L836.3,448.97 L838.4,448.65 L840.5,448.35 L842.6,448.06 L844.7,447.78 L846.8,447.51 L848.9,447.25 L851.0,447.01 L853.1,446.78 L855.2,446.56 L857.3,446.36 L859.4,446.17 L861.5,445.99 L863.6,445.82 L865.7,445.66 L867.8,445.52 L869.9,445.39 L872.0,445.26 L874.1,445.15 L876.2,445.06 L878.3,444.97 L880.4,444.89 L882.5,444.83 L884.6,444.77 L886.7,444.73 L888.7,444.70 L890.8,444.67 L892.9,444.66 L895.0,444.66 L897.1,444.67 L899.2,444.69 L901.3,444.71 L903.4,444.75 L905.5,444.80 L907.6,444.86 L909.7,444.93 L911.8,445.01 L913.9,445.10 L916.0,445.20 L918.1,445.31 L920.2,445.44 L922.3,445.58 L924.4,445.73 L926.5,445.89 L928.6,446.07 L930.7,446.25 L932.8,446.45 L934.9,446.66 L937.0,446.88 L939.1,447.12 L941.2,447.36 L943.3,447.61 L945.4,447.87 L947.5,448.14 L949.6,448.42 L951.7,448.71 L953.8,449.00 L955.9,449.31 L957.9,449.61 L960.0,449.93 L962.1,450.25 L964.2,450.57 L966.3,450.90 L968.4,451.22 L970.5,451.55 L972.6,451.88 L974.7,452.21 L976.8,452.54 L978.9,452.87 L981.0,453.19 L983.1,453.51 L985.2,453.82 L987.3,454.13 L989.4,454.43 L991.5,454.73 L991.5,580.5 L364.5,580.5 Z" fill="#07b28d"/>
<path d="M364.5,231.5 L476.5,231.5 L364.5,274.5 Z" fill="#07d6aa"/>
<circle cx="476.5" cy="231" r="1.6" fill="#fff" stroke="#222" stroke-width="0.9"/>
<circle cx="364.3" cy="274" r="1.6" fill="#fff" stroke="#222" stroke-width="0.9"/>
<path d="M418.3,250.6 L424.3,256.6 M424.3,250.6 L418.3,256.6" stroke="#111" stroke-width="1.6" fill="none"/>
<path d="M419,250.3 L421.3,252.6 L423.6,250.3" stroke="#b03050" stroke-width="1.2" fill="none"/>
<path d="M588.8,409.2 L427,267" stroke="#e60012" stroke-width="2.8" stroke-linecap="round" fill="none"/>
<path d="M419.6,259.8 L434.3,266.2 L427.2,274.6 Z" fill="#e60012"/>
<path d="M41,143.8 L45.4,148" stroke="#000" stroke-width="1.1" fill="none"/><path d="M46.2,148.8 l-3.8,-0.8 l3,-3 z" fill="#000"/>
<rect x="3" y="3" width="15" height="14.7" fill="#58a83a"/>
<path d="M3.6,3.4 L8.6,3.2 C12,6.2 14.8,10.5 16.2,15.4 C11.5,14.2 6.5,11.2 3.6,7.6 Z" fill="#fbfef8"/>
<path d="M4.6,3.3 L9.6,8.2" stroke="#58a83a" stroke-width="1.1"/>
<path d="M1346.8,5.5 L1357.4,15 M1357.4,5.5 L1346.8,15" stroke="#333" stroke-width="1.8" fill="none"/>
<circle cx="1355.5" cy="29.5" r="2.7" fill="#d8420f"/><path d="M1354,31 h3 v2.3 q4.5,0.8 4.8,4.7 h-12.6 q0.3,-3.9 4.8,-4.7 z" fill="#d8420f"/>
<path d="M7.5,55.5 L11,52.5 L16.7,52.5 L16.7,63.3 L7.5,63.3 Z" fill="#fafafa" stroke="#556" stroke-width="1"/><path d="M8,58.8 h8.2 v4 h-8.2z" fill="#dcdce6"/>
<path d="M17.4,50.2 l0.9,1.7 l1.9,-0.5 l-0.5,1.9 l1.7,0.9 l-1.7,0.9 l0.5,1.9 l-1.9,-0.5 l-0.9,1.7 l-0.9,-1.7 l-1.9,0.5 l0.5,-1.9 l-1.7,-0.9 l1.7,-0.9 l-0.5,-1.9 l1.9,0.5 z" fill="#23901f"/>
<path d="M35.2,51.2 h5.4 l1.4,1.8 h5.6 v3.5 h-12.4 z" fill="#2d2f5f"/><path d="M35.6,63.3 v-12 M35.6,63.3 h10 l3,-6.8 h-10.6 z" fill="#e9eaf3" stroke="#2d2f5f" stroke-width="1"/>
<path d="M64.2,52 h9.8 l2.2,2.2 v9.5 h-12 z" fill="#2b2e6e"/><rect x="67.6" y="53" width="6" height="4.2" fill="#f6f6fb"/><rect x="67" y="59.4" width="6.4" height="4.3" fill="#4a4d86"/><rect x="68.8" y="60" width="1.9" height="3.2" fill="#f2f2f8"/>
<rect x="94.4" y="50.8" width="7.4" height="7" fill="#fff" stroke="#aaa" stroke-width="0.8"/><rect x="91.5" y="57.4" width="13" height="6" fill="#ebe4d0" stroke="#333" stroke-width="1"/><rect x="92" y="57.3" width="12" height="2" fill="#222"/>
<path d="M130.6,54.6 L142.2,59.4 L141.6,61 L137.2,60.2 L129.8,56 Z" fill="#3c3c46"/><path d="M130.6,58.2 L141.6,51.6 L142,53.2 L137.8,56.6 L131.4,59.8 Z" fill="#77777f"/>
<circle cx="128.7" cy="53.2" r="2.3" fill="#f4f4f4" stroke="#5a5a6c" stroke-width="1.3"/><circle cx="128.7" cy="60" r="2.3" fill="#f4f4f4" stroke="#5a5a6c" stroke-width="1.3"/>
<rect x="155.3" y="51.5" width="7.5" height="9" fill="#f2f6f2" stroke="#b4c0c4" stroke-width="1"/><path d="M156.8,54 h3 M156.8,56 h3 M156.8,58 h3" stroke="#c4ccd0" stroke-width="0.8"/><rect x="160.3" y="55.5" width="8.2" height="9" fill="#fbfbfd" stroke="#556" stroke-width="1"/><path d="M162,58.3 h4.8 M162,60.3 h4.8 M162,62.3 h4.8" stroke="#445" stroke-width="0.9"/>
<rect x="183.5" y="52.2" width="9.6" height="11" fill="#6e4a2e" stroke="#4a3220" stroke-width="0.8"/><rect x="183.9" y="52.6" width="8.8" height="4" fill="#8a6244"/><path d="M185.5,52.8 q0,-2.4 2.8,-2.4 q2.8,0 2.8,2.4 z" fill="#f0f0f0" stroke="#778" stroke-width="0.7"/><rect x="188.8" y="55.8" width="8" height="8.8" fill="#fbfbfd" stroke="#556" stroke-width="1"/><path d="M190.4,58.6 h3.6 M190.4,60.5 h4.8 M190.4,62.4 h4.8" stroke="#445" stroke-width="0.9"/>
<path d="M219.5,55 L226,49.8 L226,53.2 C231.5,53.2 234.3,56.3 233.8,60.5 C233.4,62.5 232.3,64 230.8,65 C232.2,61.8 230.5,57.2 226,57.3 L226,60.4 Z" fill="#3a3a44"/>
<path d="M243.2,56.1 h5.2 l-2.6,3 z" fill="#222"/>
<path d="M276,55 L269.5,49.8 L269.5,53.2 C264,53.2 261.2,56.3 261.7,60.5 C262.1,62.5 263.2,64 264.7,65 C263.3,61.8 265,57.2 269.5,57.3 L269.5,60.4 Z" fill="#c2c2c2"/>
<path d="M285.9,56.1 h5.2 l-2.6,3 z" fill="#a8a8a8"/>
<rect x="312.2" y="49.1" width="15.7" height="15.7" fill="#522a88"/><path d="M322,49.3 L325.8,49.3 C323.6,50.4 322.3,51.4 321.7,52.6 L322,55 L316,55 L317.3,50.2 L319,51.8 C319.8,50.6 320.8,49.8 322,49.3 Z" fill="#fff"/><path d="M322,56 L321.8,61.6 L320,59.9 C318,61.8 315.5,62.8 312.5,63.2 L312.5,62 C314.6,61.2 316.4,59.8 317.8,57.9 L316,56 Z" fill="#fff"/>
<path d="M357.8,59.3 v-6.6 l2.6,-2.4 h3.2 v9 z" fill="#eef0f6" stroke="#8890a8" stroke-width="0.9"/>
<rect x="348" y="57.6" width="8.2" height="7.4" fill="#2b2e6e"/><rect x="349.8" y="58.6" width="4.6" height="1.8" fill="#aeb2d8"/><rect x="350.6" y="62.6" width="1.6" height="2.4" fill="#f4f4fa"/>
<path d="M350.8,54.8 h6.4" stroke="#d0101a" stroke-width="1.6" fill="none"/><path d="M356,52 l3.6,2.8 l-3.6,2.8 z" fill="#d0101a"/>
<path d="M377,60.4 v-7.6 l2.6,-2.4 h4.6 v6.2" fill="#eef0f6" stroke="#8890a8" stroke-width="0.9"/>
<rect x="383.6" y="57.6" width="8.2" height="7.4" fill="#2b2e6e"/><rect x="385.4" y="58.6" width="4.6" height="1.8" fill="#aeb2d8"/><rect x="386.2" y="62.6" width="1.6" height="2.4" fill="#f4f4fa"/>
<path d="M379,54.8 h6.4" stroke="#d0101a" stroke-width="1.6" fill="none"/><path d="M384.4,52 l3.6,2.8 l-3.6,2.8 z" fill="#d0101a"/>
<path d="M405.5,64.5 v-11.5 l3,-2.5 h7.5 v14 z" fill="#f6f6f6" stroke="#333" stroke-width="1"/><rect x="405" y="55.5" width="13" height="6" fill="#222"/><path d="M417,55 l3.5,3.5 l-3.5,3.5 z" fill="#222"/>
<path d="M508,56 l4,4 l4,-4" stroke="#333" stroke-width="1.2" fill="none"/>
<rect x="529.5" y="50.8" width="13.6" height="10.2" fill="#bfe4ec" stroke="#2a6a78" stroke-width="1"/><path d="M536.3,52.5 v7 M532.3,56 h8 M536.3,52 l-1.5,1.8 h3z M536.3,60 l-1.5,-1.8 h3z M531.5,56 l1.8,-1.5 v3z M541,56 l-1.8,-1.5 v3z" stroke="#134" stroke-width="1" fill="#134"/><path d="M533,63.5 h6.5 M536.3,61 v2.5" stroke="#2a6a78" stroke-width="1.2"/>
<path d="M566,51 h14 v4 h-10 v10 h-4 z" fill="#dcdce8" stroke="#667" stroke-width="1"/><path d="M572,51 v2 M575,51 v2 M578,51 v2 M566,57 h2 M566,60 h2 M566,63 h2" stroke="#667" stroke-width="0.8"/>
<path d="M594.5,49.5 v13.5 M598,49.5 v13.5 M601.5,49.5 v8 M605,49.5 v7 M593.5,51 h14 M593.5,54.5 h14 M593.5,58 h5 M593.5,61.5 h4" stroke="#8a8ea8" stroke-width="1" stroke-dasharray="1.3,0.7"/><ellipse cx="603.2" cy="60.4" rx="5.8" ry="3.9" fill="#fff" stroke="#2a2a2a" stroke-width="1.3"/><circle cx="603.2" cy="60.2" r="2.6" fill="#2a2a2a"/>
<path d="M626.5,49.5 v16 M620.5,55.5 h16" stroke="#333" stroke-width="1" stroke-dasharray="1.2,1.2"/><ellipse cx="632.5" cy="61.3" rx="4.6" ry="2.9" fill="#b4b4c6" stroke="#8a8a9a" stroke-width="0.8"/><circle cx="632.5" cy="61.3" r="2" fill="#55556a"/>
<path d="M710,56.1 h5.2 l-2.6,3 z" fill="#111"/>
<rect x="737" y="51" width="13.5" height="12.5" fill="#f4f4fa" stroke="#445" stroke-width="1"/><rect x="737" y="51" width="13.5" height="2.2" fill="#445"/><path d="M739.5,61.5 v-4 l3,-1.5 l2,1.5 v-2.5 h4 v6.5 z" fill="#3a4a9a"/>
<path d="M766,52.5 l1.3,1.5 l2.6,-3 M766,57 l1.3,1.5 l2.6,-3 M766,61.5 l1.3,1.5 l2.6,-3" stroke="#3a8a1a" stroke-width="1.2" fill="none"/><path d="M771.5,53 h6.5 M771.5,57.5 h6.5 M771.5,62 h6.5" stroke="#667" stroke-width="1"/>
<rect x="801.7" y="50" width="11.8" height="9.3" fill="#ececf4" stroke="#334" stroke-width="1"/><rect x="801.2" y="49.5" width="12.8" height="3" fill="#1c1c3c"/><path d="M804.5,64 q0,-3 3,-5 q3,2 3,5 q-3,1.6 -6,0z" fill="#e5301a"/><path d="M806,64.3 q0,-1.6 1.5,-2.8 q1.5,1.2 1.5,2.8 z" fill="#f9c21a"/>
<path d="M825.1,56.1 h5.2 l-2.6,3 z" fill="#111"/>
<path d="M147,80.5 v8 M157.5,80.5 v8 M148.5,84.5 h7.5 M151,82.3 l-2.6,2.2 l2.6,2.2z M154.5,82.3 l2.6,2.2 l-2.6,2.2z" stroke="#334" stroke-width="1" fill="#334"/>
<path d="M149,95.5 h7 M149,106.5 h7 M152.5,97 v8 M150.3,99.5 l2.2,-2.6 l2.2,2.6z M150.3,102.5 l2.2,2.6 l2.2,-2.6z" stroke="#334" stroke-width="1" fill="#334"/>
<rect x="318" y="91.2" width="7.2" height="4.6" fill="#45458a"/><path d="M319.6,91.2 v-1.3 q0,-1.8 2,-1.8 q1.5,0 1.9,1" stroke="#45458a" stroke-width="1.1" fill="none"/>
<path d="M347.2,89.3 A4.6,4.6 0 1 1 346,94.5" stroke="#223" stroke-width="1.3" fill="none"/><path d="M344.3,88.2 l4.2,-0.8 l-1,4 z" fill="#223"/>
<circle cx="417.3" cy="89.5" r="2.1" fill="none" stroke="#333" stroke-width="0.9"/>
<path d="M452.5,84.5 v16" stroke="#334" stroke-width="1" stroke-dasharray="1.2,1.2"/><path d="M445.6,88.6 h2.6 v4.6 h2.8 v4.4 h-5.4 z M459.8,88.6 h-2.6 v4.6 h-2.8 v4.4 h5.4 z" fill="#e4e4f0" stroke="#556" stroke-width="1"/>
<path d="M473,92.5 h15" stroke="#334" stroke-width="1" stroke-dasharray="1.2,1.2"/><path d="M475.6,85.8 h8.8 v2.6 h-4.4 v2.4 h-4.4 z M475.6,99.6 h8.8 v-2.6 h-4.4 v-2.4 h-4.4 z" fill="#e4e4f0" stroke="#556" stroke-width="1"/>
<rect x="509.5" y="85" width="9" height="9" fill="#dadada"/><rect x="515" y="90.5" width="9" height="9" fill="#d0d0d0"/><path d="M520,84.5 l3.5,0 l0,3.5 M510,96 l0,3.5 l3.5,0" stroke="#bdbdbd" stroke-width="1" fill="none"/>
<g transform="translate(551,86.1) scale(1.0)"><path d="M0,0 C-2.2,3 -3.6,6 -3.2,9.2 L3.2,9.2 C3.6,6 2.2,3 0,0 Z" fill="#fff" stroke="#334" stroke-width="1.1"/><path d="M0,1 v5" stroke="#334" stroke-width="0.9"/><circle cx="0" cy="6.2" r="0.9" fill="#334"/><rect x="-4.2" y="10.3" width="8.4" height="2.4" fill="#334"/></g>
<path d="M626.8,90.5 l4,4 l4,-4" stroke="#333" stroke-width="1.2" fill="none"/>
<path d="M688.0,90.5 l3.7,3.7 l3.7,-3.7" stroke="#444" stroke-width="1.1" fill="none"/>
<path d="M791.0,90.5 l3.7,3.7 l3.7,-3.7" stroke="#444" stroke-width="1.1" fill="none"/>
<path d="M844.0,90.5 l3.7,3.7 l3.7,-3.7" stroke="#444" stroke-width="1.1" fill="none"/>
<path d="M877.5,86.5 C886,84.5 887,99 877.5,97.5 Z" fill="none" stroke="#223" stroke-width="1.2"/><rect x="875.8" y="85" width="3.2" height="3.2" fill="#fff" stroke="#223" stroke-width="1"/><rect x="875.8" y="96" width="3.2" height="3.2" fill="#fff" stroke="#223" stroke-width="1"/>
<path d="M910,86 h6 M910,88.5 h3 M910,91 h3 M910,93.5 h3 M910,96 h3 M910,98.5 h6" stroke="#223" stroke-width="1"/><rect x="914.5" y="87" width="9.5" height="10" fill="#d6d8ea" stroke="#223" stroke-width="1.2"/><path d="M922.2,101.8 h4.6 v-4.6 z" fill="#111"/>
<path d="M944.5,94 C947,85 951,85.5 953,91 C955,97 958,98 960,93" stroke="#223" stroke-width="1.5" fill="none"/><path d="M956.5,96.5 l4,1 l-0.5,-4.5" stroke="#223" stroke-width="1.2" fill="none"/>
<path d="M998,92.5 h9.5 M1002.7,88 v9.5 M1000.8,89.5 h3.8 M1000.8,96 h3.8" stroke="#222" stroke-width="1"/>
<path d="M1029,86 l14,13 M1043,86 l-14,13 M1036,84.5 v16 M1028,92.5 h16" stroke="#c4c4c4" stroke-width="1.3" stroke-dasharray="1.6,1.4"/>
<circle cx="1078.5" cy="92.5" r="7.6" fill="none" stroke="#b8b8b8" stroke-width="1.4"/><path d="M1073.3,92.5 h10.4 M1078.5,87.3 v10.4" stroke="#b8b8b8" stroke-width="2"/>
<path d="M209.2,122.6 h10 M214.2,117.6 v10" stroke="#adadad" stroke-width="1.8"/>
<path d="M11.5,120.5 L11.5,131.2 L14.2,128.8 L16.2,133.3 L18.2,132.4 L16.2,128 L19.6,127.8 Z" fill="#fff" stroke="#445" stroke-width="1"/>
<path d="M25,137 h-4.8 l4.8,-4.8 z" fill="#000"/>
<path d="M11.5,147.5 C8.5,152 8.5,158 11.5,163" stroke="#445" stroke-width="1" fill="none"/><rect x="8.2" y="152" width="3" height="3" fill="#fff" stroke="#223" stroke-width="1"/><path d="M13.5,154 L20.5,157.3 L16.5,161.8 Z" fill="#223"/>
<path d="M25,164 h-4.8 l4.8,-4.8 z" fill="#000"/>
<path d="M12.6,184 v10.6 h9.6 M9,187.6 h10.2 v10.4" stroke="#334" stroke-width="1.5" fill="none"/><path d="M13.4,193.8 L21.6,185.2" stroke="#334" stroke-width="1.1"/>
<path d="M25,200 h-4.8 l4.8,-4.8 z" fill="#000"/>
<circle cx="13.5" cy="218.5" r="5.6" fill="#f6f6fa" stroke="#445" stroke-width="1.1"/><path d="M8.6,219 a5,5 0 0 0 9.8,0 z" fill="#c4c6dc"/><path d="M17.5,222.8 L23,228" stroke="#223" stroke-width="2.2"/>
<path d="M25,229 h-4.8 l4.8,-4.8 z" fill="#000"/>
<path d="M15,247 C12.3,251 11,255 11.6,258.3 L18.4,258.3 C19,255 17.7,251 15,247 Z" fill="#fff" stroke="#223" stroke-width="1.1"/><path d="M15,248 v6" stroke="#223" stroke-width="0.9"/><circle cx="15" cy="254.8" r="1" fill="#223"/><rect x="10.6" y="259.3" width="8.8" height="2.8" fill="#223"/>
<path d="M25,264 h-4.8 l4.8,-4.8 z" fill="#000"/>
<path d="M9,281.5 C11,278 14.5,279.5 16.5,282.5 C18,284.8 21,285 21.3,283 C21.6,281 18.5,281.5 19,284 C19.5,287.5 15,288.5 13.5,286.5" stroke="#223" stroke-width="1.7" fill="none" stroke-linecap="round"/>
<rect x="9.2" y="306.7" width="11.6" height="10.3" fill="#fafafc" stroke="#445" stroke-width="1"/><rect x="9.8" y="312.5" width="10.4" height="4" fill="#d4d6e6"/>
<path d="M25,320 h-4.8 l4.8,-4.8 z" fill="#000"/>
<circle cx="15" cy="339.8" r="5.8" fill="#fafafc" stroke="#445" stroke-width="1"/><path d="M9.8,341 a5.3,5.3 0 0 0 10.4,0 z" fill="#d4d6e6"/>
<path d="M25,348 h-4.8 l4.8,-4.8 z" fill="#000"/>
<path d="M8.3,368 L11.5,362.5 L18.5,362.5 L21.7,368 L18.5,373.5 L11.5,373.5 Z" fill="#fafafc" stroke="#445" stroke-width="1"/><path d="M8.9,369 L11.8,373 L18.2,373 L21.1,369 Z" fill="#d4d6e6"/>
<path d="M25,376 h-4.8 l4.8,-4.8 z" fill="#000"/>
<path d="M8.5,410.5 L13.6,396.8 L16.6,396.8 L21.7,410.5 L18.6,410.5 L17.4,407 L12.7,407 L11.5,410.5 Z M13.6,404.5 L16.5,404.5 L15.05,400 Z" fill="#f4f4f8" stroke="#556" stroke-width="1" fill-rule="evenodd"/>
<path d="M25,412 h-4.8 l4.8,-4.8 z" fill="#000"/>
<path d="M9.5,444 L20.5,433.5" stroke="#223" stroke-width="1.4"/><path d="M8.3,440.5 L12.5,446 M17.5,431.5 L21.8,437" stroke="#223" stroke-width="1.6"/><path d="M10.5,443 l3.5,-0.8 l-2.4,-2.6z M19.5,434.5 l-3.5,0.8 l2.4,2.6z" fill="#223"/>
<path d="M25,448 h-4.8 l4.8,-4.8 z" fill="#000"/>
<path d="M12.5,462 L17.5,472" stroke="#223" stroke-width="1.3"/><rect x="10.3" y="459.5" width="4.4" height="4.4" fill="#e8861a" stroke="#a05a10" stroke-width="0.8"/><rect x="15.3" y="470.3" width="4.4" height="4.4" fill="#e8861a" stroke="#a05a10" stroke-width="0.8"/>
<path d="M25,476 h-4.8 l4.8,-4.8 z" fill="#000"/>
<rect x="10.5" y="500.5" width="9.5" height="9.5" fill="#8a8ca8"/><rect x="8" y="498" width="9.5" height="9.5" fill="#fafafc" stroke="#445" stroke-width="1"/>
<path d="M25,512 h-4.8 l4.8,-4.8 z" fill="#000"/>
<path d="M13,524 L19.5,527 L17.5,531.5 C15.5,533 12.5,531.5 11.5,529 Z" fill="#f4f6fa" stroke="#445" stroke-width="1.1"/><path d="M13.8,532 L9.5,535.5 M7.5,533.5 L11.5,537.5" stroke="#667" stroke-width="1.1"/><path d="M15.5,539.2 L22.5,539.2 L19,531.5 Z" fill="#445066"/>
<rect x="7" y="566.5" width="8.5" height="8.5" fill="#e8861a"/><path d="M7,570.5 h8.5 M11.2,566.5 v8.5" stroke="#f4b060" stroke-width="0.8"/><path d="M12.5,569.5 L18,563.5" stroke="#445" stroke-width="2.4"/><path d="M17,564.5 L21.5,559.5" stroke="#223" stroke-width="3.4" stroke-linecap="round"/><path d="M15.5,561.5 L20,566" stroke="#223" stroke-width="1.6"/>
<path d="M25,577 h-4.8 l4.8,-4.8 z" fill="#000"/>
<path d="M9.4,592.8 L13.4,588.8 L17.6,593 L13.6,597 Z" fill="#f0f0f4" stroke="#334" stroke-width="1"/><path d="M10.4,593.2 L16.6,593.2 L13.6,596.3 Z" fill="#c8721a"/><path d="M12.2,587.4 L14.4,590.2" stroke="#334" stroke-width="1.2"/><path d="M13.7,603 L21.5,603 C21.5,599.4 19.6,597 17.6,597 C15.6,597 13.7,599.4 13.7,603 Z" fill="#efc85a"/>
<path d="M25,605 h-4.8 l4.8,-4.8 z" fill="#000"/>
<path d="M7.6,620.2 L11.6,616.2 L15.6,620.2 L11.6,624.2 Z" fill="#f0f0f4" stroke="#334" stroke-width="1"/><path d="M8.6,620.6 L14.6,620.6 L11.6,623.6 Z" fill="#d9821e"/><path d="M10.4,614.6 L12.6,617.4" stroke="#334" stroke-width="1.2"/><rect x="13.5" y="625.5" width="6.6" height="5" fill="#fff" stroke="#445" stroke-width="1"/><rect x="15.8" y="623.3" width="6.8" height="5.2" fill="#f0f0f4" stroke="#445" stroke-width="1"/><rect x="16.4" y="625.6" width="3.6" height="2.8" fill="#e8861a"/>
<circle cx="15" cy="665.5" r="7.8" fill="none" stroke="#c9c9c9" stroke-width="1.5"/><path d="M9.6,665.5 h10.8 M15,660.1 v10.8" stroke="#c9c9c9" stroke-width="2.2"/>
<path d="M1310.8,162.3 l3.7,-3.7 l3.7,3.7" stroke="#3a3a3a" stroke-width="2.3" fill="none"/>
<path d="M1310.8,646.6 l3.7,3.7 l3.7,-3.7" stroke="#3a3a3a" stroke-width="2.3" fill="none"/>
<path d="M697.4,662 l-3.7,3.7 l3.7,3.7" stroke="#3a3a3a" stroke-width="2.3" fill="none"/>
<path d="M1294.6,662 l3.7,3.7 l-3.7,3.7" stroke="#3a3a3a" stroke-width="2.3" fill="none"/>
<circle cx="1313" cy="664.5" r="4.6" fill="#fff" stroke="#334" stroke-width="1.2"/><circle cx="1313" cy="664.5" r="2" fill="none" stroke="#556" stroke-width="0.8"/><path d="M1313,659.5 v10 M1308,664.5 h10" stroke="#556" stroke-width="0.6"/><path d="M1316.5,668 L1320,671.5" stroke="#223" stroke-width="2"/>
<path d="M1333.5,118 l8.5,8.5 M1342,118 l-8.5,8.5" stroke="#9a9a9a" stroke-width="1.2"/>
<path d="M1331,136.5 L1331,147 L1333.8,144.8 L1335.6,148.8 L1337.4,148 L1335.6,144 L1338.8,143.8 Z" fill="#fff" stroke="#223" stroke-width="1"/><path d="M1340,138 q2.5,-2 4,0 q0.8,2 -1.8,3.5 v1.3 M1342.2,145 v1.2" stroke="#334" stroke-width="1.4" fill="none"/>
<rect x="1333" y="210" width="11" height="11" fill="#c8cce6" stroke="#667" stroke-width="0.9"/><path d="M1336,213 h5 v5 h-5z" fill="#8088c0"/><path d="M1330.5,212.5 l3.5,-4 l2.2,2 l-3.5,4 z" fill="#e8a53a" stroke="#885" stroke-width="0.5"/>
<rect x="1330" y="343.5" width="4" height="3.2" fill="#f6f6f6" stroke="#556" stroke-width="0.8"/><rect x="1338" y="347.5" width="6" height="3.8" fill="#8088c0" stroke="#556" stroke-width="0.8"/><rect x="1338" y="353" width="6" height="3.8" fill="#c8cce6" stroke="#556" stroke-width="0.8"/><path d="M1332,347 v8.5 h5.5 M1332,349.5 h5.5 M1334.5,345 h8" stroke="#556" stroke-width="0.8" fill="none" stroke-dasharray="1.2,0.8"/>
<path d="M1337.6,473.5 l1.9,4.2 l4.5,0.5 l-3.4,3 l1,4.5 l-4,-2.3 l-4,2.3 l1,-4.5 l-3.4,-3 l4.5,-0.5 z" fill="#f4f4f4" stroke="#556" stroke-width="1"/>
<path d="M1333.5,598.5 v14 M1333.5,601 h11" stroke="#b0b0b0" stroke-width="1.4" stroke-dasharray="2,1.2"/><path d="M1331.5,601.5 l2,-2.5 l2,2.5" stroke="#b0b0b0" stroke-width="1" fill="none"/>
<circle cx="1337.5" cy="645.3" r="7.4" fill="none" stroke="#bdbdbd" stroke-width="1.1"/><path d="M1332.5,645.3 h10 M1337.5,640.3 v10" stroke="#bdbdbd" stroke-width="1.6"/>
<path d="M1354,122 L1354,132 L1359.5,127 Z" fill="#000"/>
<path d="M1352,149 L1357.5,142.5" stroke="#b5b5b5" stroke-width="2"/><path d="M1357,143 L1361,138.5" stroke="#b0b0b0" stroke-width="3.2" stroke-linecap="round"/><path d="M1355.5,140.5 L1359.8,144.8" stroke="#b0b0b0" stroke-width="1.4"/>
<path d="M1353,160 l4,-3.6 l4,3.6" stroke="#d0d0d0" stroke-width="1.3" fill="none"/>
<path d="M1350,167 L1364,182 M1364,167 L1350,182" stroke="#000" stroke-width="1"/>
<path d="M1353,661 l4,3.6 l4,-3.6" stroke="#b8b8b8" stroke-width="1.3" fill="none"/>
<path d="M1353.5,676 l2.8,2.8 l-2.8,2.8 M1357.5,676 l2.8,2.8 l-2.8,2.8" stroke="#b8b8b8" stroke-width="1.1" fill="none"/>
<path d="M52.5,659.5 h5.5 l3,3 v8.5 h-8.5 z" fill="#fff" stroke="#000" stroke-width="1.1"/><path d="M54,666.3 h5.6 M56.8,663.5 v5.6" stroke="#000" stroke-width="1.5"/>
<path d="M198.5,659.5 h5.5 l3,3 v8.5 h-8.5 z" fill="#fff" stroke="#000" stroke-width="1.1"/><path d="M200,666.3 h5.6 M202.8,663.5 v5.6" stroke="#000" stroke-width="1.5"/>
<rect x="70" y="661" width="1.6" height="9" fill="#808080"/><path d="M77.5,661 v9 l-5,-4.5 z" fill="#808080"/>
<path d="M94.5,661 v9 l-5.5,-4.5 z" fill="#808080"/>
<path d="M166,661 v9 l5.5,-4.5 z" fill="#808080"/>
<rect x="188.4" y="661" width="1.6" height="9" fill="#808080"/><path d="M182.5,661 v9 l5,-4.5 z" fill="#808080"/>
<path d="M212.5,657.5 V675 H278.5 V665.5 L271.5,657.5 Z" fill="#fff"/><path d="M212.5,657.5 V675 M278.5,675 V665.5 L271.5,657.5" fill="none" stroke="#8a8a8a" stroke-width="1"/>
<path d="M42,680 v9.5 l5.5,-4.75 z" fill="#000"/>
<path d="M54.5,690.5 L60,684" stroke="#667" stroke-width="2"/><path d="M59.5,684.5 L64,679.5" stroke="#223" stroke-width="3.4" stroke-linecap="round"/><path d="M58,682 L62.5,686.5" stroke="#223" stroke-width="1.5"/>
<path d="M76.5,680.5 l-4,4.3 l4,4.3" stroke="#d0d0d0" stroke-width="1.3" fill="none"/>
<path d="M84,677 L100,693 M100,677 L84,693" stroke="#000" stroke-width="1"/>
<path d="M1291,680.5 l4,4.3 l-4,4.3" stroke="#c8c8c8" stroke-width="1.3" fill="none"/>
<path d="M1305.5,681.8 l2.8,3 l-2.8,3 M1309.5,681.8 l2.8,3 l-2.8,3" stroke="#c8c8c8" stroke-width="1.1" fill="none"/>
<path d="M105,707 v8 l5,-4 z" fill="#000"/>
<rect x="913.5" y="704.5" width="13" height="10" fill="#e6e8f4" stroke="#556" stroke-width="1"/><circle cx="920" cy="709.5" r="3.2" fill="#fff" stroke="#b33" stroke-width="1.1"/><circle cx="920" cy="709.5" r="1.2" fill="#445"/><path d="M916.5,718 h7 M920,714.5 v3.5" stroke="#556" stroke-width="1.2"/>
<path d="M942,711 L948,705 L954.5,711.5 L948.5,717.5 Z" fill="#fafafa" stroke="#334" stroke-width="1"/><path d="M943.3,711.3 L953.3,711.3 L948.5,716.2 Z" fill="#d9821e"/><path d="M946,703.5 L949,707.5" stroke="#334" stroke-width="1.1"/><path d="M955.3,712.5 q1.8,2.8 0,4.2 q-1.8,-1.4 0,-4.2z" fill="#d9821e"/>
<g transform="translate(1158,704.5) scale(0.95)"><path d="M0,0 C-2.2,3 -3.6,6 -3.2,9.2 L3.2,9.2 C3.6,6 2.2,3 0,0 Z" fill="#fff" stroke="#334" stroke-width="1.1"/><path d="M0,1 v5" stroke="#334" stroke-width="0.9"/><circle cx="0" cy="6.2" r="0.9" fill="#334"/><rect x="-4.2" y="10.3" width="8.4" height="2.4" fill="#334"/></g>
<path d="M1172,703 L1188,719 M1188,703 L1172,719" stroke="#000" stroke-width="1"/>
<path d="M16,742.3 L22.6,741.4 L22.6,747.4 L16,747.4 Z M23.5,741.2 L32,740 L32,747.4 L23.5,747.4 Z M16,748.3 L22.6,748.3 L22.6,754.3 L16,753.4 Z M23.5,748.3 L32,748.3 L32,755.7 L23.5,754.5 Z" fill="#fff"/>
<circle cx="74.5" cy="745.4" r="5.2" fill="none" stroke="#fff" stroke-width="1.3"/><path d="M70.8,749.4 L64.5,755.6" stroke="#fff" stroke-width="1.4"/>
<rect x="114.6" y="741.7" width="11" height="12.8" fill="none" stroke="#fff" stroke-width="1.2"/><path d="M112.6,743.9 h-2 v8.6 h2 M127.6,743.9 h2 v8.6 h-2" stroke="#fff" stroke-width="1.1" fill="none"/>
<path d="M161,748.8 C161.3,742.3 165.8,737.6 171.8,737.6 C177.8,737.6 181.3,741.8 181.3,748 L181.3,750.4 L168.6,750.4 C168.9,753.4 171,754.8 173.8,754.8 C176.2,754.8 178.4,754.1 180.3,752.9 L180.3,757.2 C178.3,758.3 175.8,758.9 173,758.9 C167,758.9 163.3,755.3 163.3,750 C163.3,746.4 165.2,743.6 168,742.2 C164.8,743 162.3,745.4 161,748.8 Z M168.8,746.6 L175.6,746.6 C175.6,744.2 174.3,742.8 172.3,742.8 C170.3,742.8 169.1,744.3 168.8,746.6 Z" fill="#1e7fd8" fill-rule="evenodd"/>
<path d="M209.3,739.6 q0,-0.8 0.8,-0.8 h6.6 l1.6,1.6 h11.4 q0.8,0 0.8,0.8 v15 h-21.2 z" fill="#f4cf6e"/><path d="M209.3,741.8 h21.2 v14.4 h-21.2 z" fill="#fbe08e"/><path d="M212.7,756.2 v-6.6 q0,-1.6 1.6,-1.6 h11 q1.6,0 1.6,1.6 v6.6 h-3.9 v-4.2 h-6.2 v4.2 z" fill="#3a9bdc"/>
<path d="M264.6,742 v-1.6 a5,4.2 0 0 1 10,0 v1.6" stroke="#fff" stroke-width="1.1" fill="none"/><path d="M257,742 h23 v14.8 q0,2 -2,2 h-19 q-2,0 -2,-2 z" fill="#fff"/><rect x="263" y="744.9" width="4.8" height="4.6" fill="#f25022"/><rect x="268.9" y="744.9" width="5" height="4.6" fill="#7fba00"/><rect x="263" y="751" width="4.8" height="4.7" fill="#00a4ef"/><rect x="268.9" y="751" width="5" height="4.7" fill="#ffb900"/>
<path d="M306,743.6 L318,738 L330,743.6 V757 H306 Z" fill="#fff"/><path d="M307.8,744.6 L328.4,744.6 L320.3,749.8 L324.8,754 L318.6,751.2 Z" fill="#000"/>
<rect x="355" y="735.7" width="24" height="24.3" fill="#5aa93b"/>
<path d="M363.5,736 L378.6,736 L378.6,741 L373.6,752 L370.6,752 Z" fill="#86c667"/><path d="M367.5,736 L371.5,750 M372,736 L372.3,750 M376,736 L373.2,750" stroke="#b4dea0" stroke-width="1.2"/><rect x="370.3" y="753" width="3.6" height="2.6" fill="#a6d98c"/>
<path d="M355,739.2 L356.2,737.6 L366.4,748.2 L369.9,757.4 L361.5,752.6 L355,745.8 Z" fill="#f6fff0"/><path d="M355.6,741.5 L363.8,750" stroke="#5aa93b" stroke-width="1"/>
<circle cx="1090.3" cy="742.8" r="2.5" fill="none" stroke="#fff" stroke-width="1.1"/><circle cx="1083.8" cy="748.9" r="2.5" fill="none" stroke="#fff" stroke-width="1.1"/><path d="M1087.4,747.2 q2.9,-2.8 5.4,-0.6 q1,1 1.1,2.3 M1080.3,754.9 q0.5,-3.4 3.5,-3.4 q3,0 3.8,3.4" stroke="#fff" stroke-width="1.1" fill="none"/>
<path d="M1117.3,751 l5.7,-5.7 l5.7,5.7" stroke="#fff" stroke-width="1.3" fill="none"/>
<rect x="1140.5" y="744.7" width="13" height="7.6" fill="none" stroke="#fff" stroke-width="1.2"/><rect x="1142.3" y="746.4" width="6" height="4.2" fill="#fff"/><rect x="1154" y="747" width="1.4" height="3" fill="#fff"/>
<path d="M1168.5,746.5 a10.5,10.5 0 0 1 9,-4.3 M1171,748.6 a7.4,7.4 0 0 1 6.8,-3 M1173.6,750.6 a4.2,4.2 0 0 1 4.4,-1.8" stroke="#8a8a8a" stroke-width="1.2" fill="none"/><circle cx="1176.8" cy="753.2" r="1.3" fill="#8a7a8a"/><circle cx="1167.2" cy="751.5" r="4.2" fill="#d8262c"/><path d="M1165.2,749.5 l4,4 M1169.2,749.5 l-4,4" stroke="#fff" stroke-width="1.1"/>
<path d="M1187.5,746.6 h2.6 l3.6,-3.3 v10.6 l-3.6,-3.3 h-2.6 z" fill="none" stroke="#fff" stroke-width="1.1"/><path d="M1195.8,746 l4.8,4.8 M1200.6,746 l-4.8,4.8" stroke="#fff" stroke-width="1.2"/>
<path d="M1325.5,741 h15 v10.5 h-5 l-2.5,2.8 l-2.5,-2.8 h-5 z" fill="none" stroke="#fff" stroke-width="1.2"/>
</svg>
<span style="left:80.494453125px;top:136.68px;font-size:9px;line-height:9px;color:#808080;">40</span>
<span style="left:150.494453125px;top:136.68px;font-size:9px;line-height:9px;color:#808080;">30</span>
<span style="left:220.494453125px;top:136.68px;font-size:9px;line-height:9px;color:#808080;">20</span>
<span style="left:289.494453125px;top:136.68px;font-size:9px;line-height:9px;color:#808080;">10</span>
<span style="left:361.9972265625px;top:136.68px;font-size:9px;line-height:9px;color:#808080;">0</span>
<span style="left:429.494453125px;top:136.68px;font-size:9px;line-height:9px;color:#808080;">10</span>
<span style="left:498.494453125px;top:136.68px;font-size:9px;line-height:9px;color:#808080;">20</span>
<span style="left:568.494453125px;top:136.68px;font-size:9px;line-height:9px;color:#808080;">30</span>
<span style="left:638.494453125px;top:136.68px;font-size:9px;line-height:9px;color:#808080;">40</span>
<span style="left:707.494453125px;top:136.68px;font-size:9px;line-height:9px;color:#808080;">50</span>
<span style="left:777.494453125px;top:136.68px;font-size:9px;line-height:9px;color:#808080;">60</span>
<span style="left:847.494453125px;top:136.68px;font-size:9px;line-height:9px;color:#808080;">70</span>
<span style="left:916.494453125px;top:136.68px;font-size:9px;line-height:9px;color:#808080;">80</span>
<span style="left:986.494453125px;top:136.68px;font-size:9px;line-height:9px;color:#808080;">90</span>
<span style="left:1053.9916796875px;top:136.68px;font-size:9px;line-height:9px;color:#808080;">100</span>
<span style="left:1123.3256640625px;top:136.68px;font-size:9px;line-height:9px;color:#808080;">110</span>
<span style="left:1192.9916796875px;top:136.68px;font-size:9px;line-height:9px;color:#808080;">120</span>
<span style="left:1272.5px;top:135.96px;font-size:9.5px;line-height:9.5px;color:#808080;letter-spacing:0.161px;">millimeters</span>
<span style="left:33px;top:648.70px;font-size:9px;line-height:9px;color:#808080;transform-origin:0 0;transform:rotate(-90deg);"></span>
<span style="left:33px;top:581.20px;font-size:9px;line-height:9px;color:#808080;transform-origin:0 0;transform:rotate(-90deg);">0</span>
<span style="left:33px;top:513.71px;font-size:9px;line-height:9px;color:#808080;transform-origin:0 0;transform:rotate(-90deg);">10</span>
<span style="left:33px;top:443.71px;font-size:9px;line-height:9px;color:#808080;transform-origin:0 0;transform:rotate(-90deg);">20</span>
<span style="left:33px;top:374.71px;font-size:9px;line-height:9px;color:#808080;transform-origin:0 0;transform:rotate(-90deg);">30</span>
<span style="left:33px;top:304.71px;font-size:9px;line-height:9px;color:#808080;transform-origin:0 0;transform:rotate(-90deg);">40</span>
<span style="left:33px;top:234.71px;font-size:9px;line-height:9px;color:#808080;transform-origin:0 0;transform:rotate(-90deg);">50</span>
<span style="left:33px;top:164.71px;font-size:9px;line-height:9px;color:#808080;transform-origin:0 0;transform:rotate(-90deg);">60</span>
<span style="left:33px;top:671px;font-size:10px;line-height:10px;color:#808080;transform-origin:0 0;transform:rotate(-90deg);letter-spacing:0px;">millimeters</span>
<span style="left:21.0px;top:5.44px;font-size:12px;line-height:12px;color:#000;letter-spacing:-0.306px;">CorelDRAW X7 - ID Card</span>
<span style="left:8.5px;top:26.44px;font-size:12px;line-height:12px;color:#000;letter-spacing:-0.112px;">File</span>
<span style="left:43.5px;top:26.44px;font-size:12px;line-height:12px;color:#000;letter-spacing:0.441px;">Edit</span>
<span style="left:82.5px;top:26.44px;font-size:12px;line-height:12px;color:#000;letter-spacing:0.069px;">View</span>
<span style="left:125.5px;top:26.44px;font-size:12px;line-height:12px;color:#000;letter-spacing:0.194px;">Layout</span>
<span style="left:179.5px;top:26.44px;font-size:12px;line-height:12px;color:#000;letter-spacing:0.264px;">Object</span>
<span style="left:232.5px;top:26.44px;font-size:12px;line-height:12px;color:#000;letter-spacing:-0.077px;">Effects</span>
<span style="left:285.5px;top:26.44px;font-size:12px;line-height:12px;color:#000;letter-spacing:0.108px;">Bitmaps</span>
<span style="left:346.5px;top:26.44px;font-size:12px;line-height:12px;color:#000;letter-spacing:-0.003px;">Text</span>
<span style="left:386.5px;top:26.44px;font-size:12px;line-height:12px;color:#000;letter-spacing:0.078px;">Table</span>
<span style="left:433.5px;top:26.44px;font-size:12px;line-height:12px;color:#000;letter-spacing:0.246px;">Tools</span>
<span style="left:480.5px;top:26.44px;font-size:12px;line-height:12px;color:#000;letter-spacing:0.464px;">Window</span>
<span style="left:542.5px;top:26.44px;font-size:12px;line-height:12px;color:#000;letter-spacing:0.440px;">Help</span>
<span style="left:405.5px;top:56.47px;font-size:5px;line-height:5px;color:#fff;letter-spacing:0.750px;font-weight:bold;">PDF</span>
<span style="left:442.7px;top:51.74px;font-size:12px;line-height:12px;color:#000;letter-spacing:-0.664px;">184%</span>
<span style="left:657.4px;top:51.64px;font-size:12px;line-height:12px;color:#000;letter-spacing:-0.170px;">Snap To</span>
<span style="left:32.8px;top:79.44px;font-size:12px;line-height:12px;color:#000;letter-spacing:-1.138px;">X:</span>
<span style="left:32.8px;top:95.14px;font-size:12px;line-height:12px;color:#000;letter-spacing:-0.476px;">Y:</span>
<span style="left:48.0px;top:79.44px;font-size:12px;line-height:12px;color:#000;letter-spacing:-0.180px;">8,108 mm</span>
<span style="left:48.0px;top:95.14px;font-size:12px;line-height:12px;color:#000;letter-spacing:-0.379px;">46,929 mm</span>
<span style="left:163.8px;top:79.44px;font-size:12px;line-height:12px;color:#000;letter-spacing:-0.291px;">16,215 mm</span>
<span style="left:163.8px;top:95.14px;font-size:12px;line-height:12px;color:#000;letter-spacing:-0.194px;">6,142 mm</span>
<span style="left:255.3px;top:79.44px;font-size:12px;line-height:12px;color:#000;letter-spacing:-0.783px;">125,6</span>
<span style="left:255.3px;top:95.14px;font-size:12px;line-height:12px;color:#000;letter-spacing:-0.783px;">125,6</span>
<span style="left:296.5px;top:80.29px;font-size:11px;line-height:11px;color:#222;letter-spacing:-0.181px;">%</span>
<span style="left:296.5px;top:95.99px;font-size:11px;line-height:11px;color:#222;letter-spacing:-0.181px;">%</span>
<span style="left:363.8px;top:86.64px;font-size:12px;line-height:12px;color:#000;letter-spacing:-0.591px;">0,0</span>
<span style="left:567.9px;top:86.00px;font-size:13px;line-height:13px;color:#000;letter-spacing:-0.560px;">None</span>
<span style="left:965.5px;top:86.64px;font-size:12px;line-height:12px;color:#000;letter-spacing:-0.348px;">50</span>
<span style="left:33.0px;top:116.64px;font-size:12px;line-height:12px;color:#111;letter-spacing:-0.242px;">Welcome Screen</span>
<span style="left:145.0px;top:116.64px;font-size:12px;line-height:12px;color:#111;letter-spacing:-0.307px;">ID Card</span>
<span style="left:1343.12px;top:156.7px;font-size:12px;line-height:12px;color:#111;letter-spacing:-0.210px;transform-origin:0 0;transform:rotate(90deg);">Hints</span>
<span style="left:1343.12px;top:228.5px;font-size:12px;line-height:12px;color:#111;letter-spacing:-0.232px;transform-origin:0 0;transform:rotate(90deg);">Object Properties</span>
<span style="left:1343.12px;top:363.6px;font-size:12px;line-height:12px;color:#111;letter-spacing:-0.106px;transform-origin:0 0;transform:rotate(90deg);">Object Manager</span>
<span style="left:1343.12px;top:492.4px;font-size:12px;line-height:12px;color:#111;letter-spacing:-0.369px;transform-origin:0 0;transform:rotate(90deg);">Insert Character</span>
<span style="left:115.1px;top:660.54px;font-size:12px;line-height:12px;color:#111;letter-spacing:-0.345px;">1 of 1</span>
<span style="left:226.5px;top:658.84px;font-size:12px;line-height:12px;color:#111;letter-spacing:-0.507px;">Page 1</span>
<span style="left:5.1px;top:705.54px;font-size:12px;line-height:12px;color:#111;letter-spacing:-0.537px;">( 36,602; 54,215 )</span>
<span style="left:157.5px;top:705.54px;font-size:12px;line-height:12px;color:#111;letter-spacing:-0.237px;">Curve on Layer 1</span>
<span style="left:982.5px;top:705.84px;font-size:12px;line-height:12px;color:#111;letter-spacing:-0.576px;">R7 G214 B170 (#07D6AA)</span>
<span style="left:1192.5px;top:705.84px;font-size:12px;line-height:12px;color:#111;letter-spacing:0.104px;">None</span>
<span style="left:1213.1px;top:742.69px;font-size:11px;line-height:11px;color:#fff;letter-spacing:-0.419px;">ENG</span>
<span style="left:1264.3px;top:732.64px;font-size:12px;line-height:12px;color:#fff;letter-spacing:-0.683px;">19:26</span>
<span style="left:1249.5px;top:750.14px;font-size:12px;line-height:12px;color:#fff;letter-spacing:-0.229px;">19/05/2018</span>
</div></body></html>
